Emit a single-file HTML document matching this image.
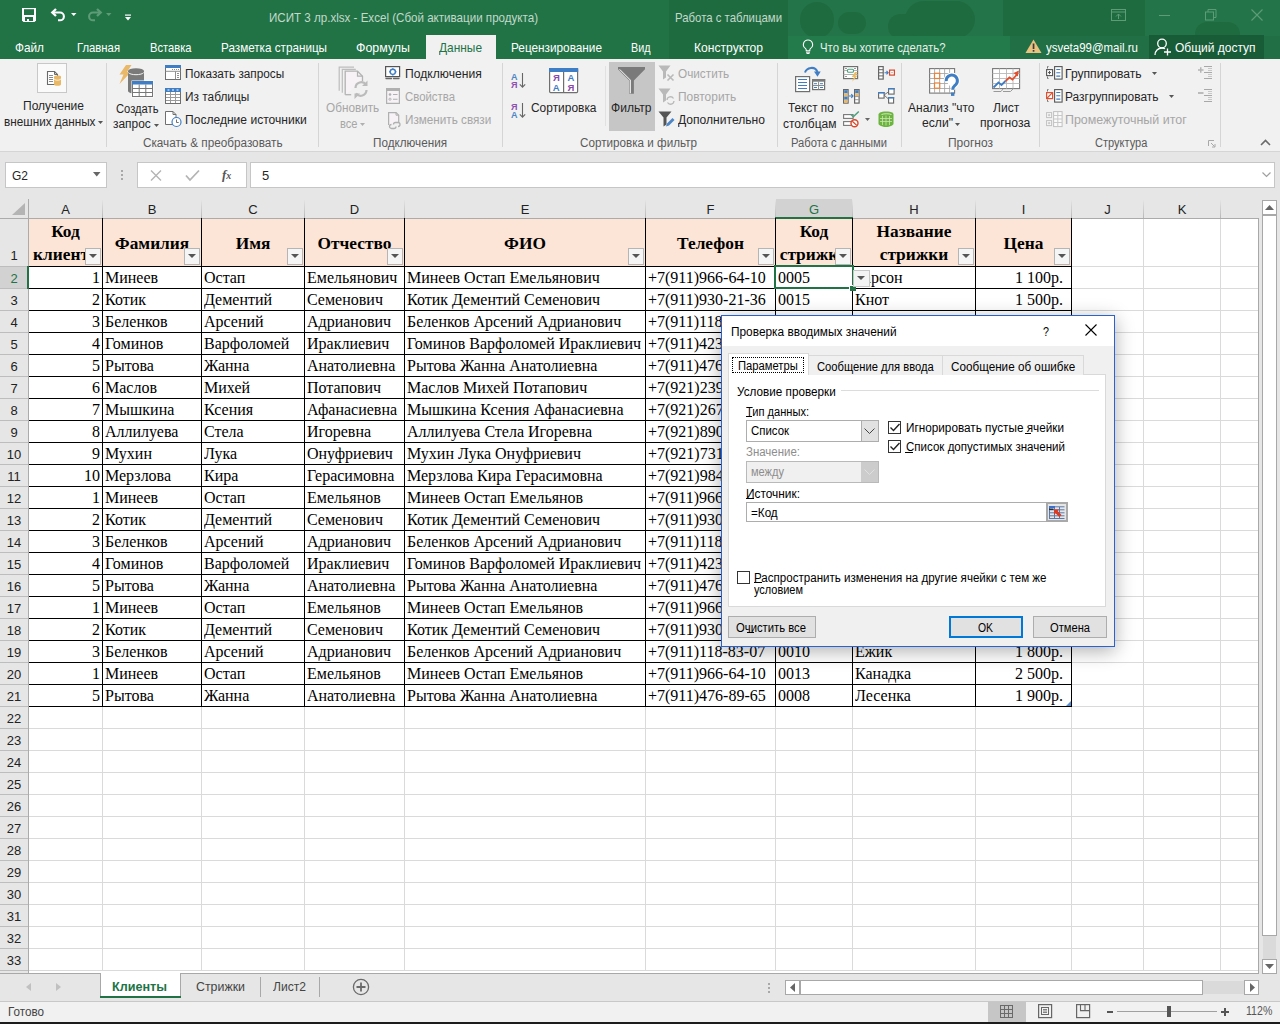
<!DOCTYPE html>
<html><head><meta charset="utf-8"><title>Excel</title>
<style>
*{box-sizing:border-box;margin:0;padding:0}
html,body{width:1280px;height:1024px;overflow:hidden;background:#fff;font-family:"Liberation Sans",sans-serif;font-size:12px;color:#262626;position:relative}
.a{position:absolute;white-space:nowrap}
svg.a{overflow:visible}
</style></head><body>
<div class="a" style="left:0px;top:199px;width:1280px;height:772px;background:#fff"></div>
<div class="a" style="left:0px;top:199px;width:1258px;height:19px;background:#e6e6e6"></div>
<div class="a" style="left:0px;top:218px;width:1258px;height:1px;background:#ababab"></div>
<div class="a" style="left:0px;top:219px;width:28px;height:752px;background:#e6e6e6"></div>
<div class="a" style="left:28px;top:199px;width:1px;height:772px;background:#ababab"></div>
<svg class="a" style="left:10px;top:202px" width="16" height="14"><polygon points="15,1 15,13 2,13" fill="#b4b4b4"/></svg>
<div class="a" style="left:102px;top:199px;width:1px;height:19px;background:linear-gradient(#e6e6e6,#b8b8b8)"></div>
<div class="a" style="left:201px;top:199px;width:1px;height:19px;background:linear-gradient(#e6e6e6,#b8b8b8)"></div>
<div class="a" style="left:304px;top:199px;width:1px;height:19px;background:linear-gradient(#e6e6e6,#b8b8b8)"></div>
<div class="a" style="left:404px;top:199px;width:1px;height:19px;background:linear-gradient(#e6e6e6,#b8b8b8)"></div>
<div class="a" style="left:645px;top:199px;width:1px;height:19px;background:linear-gradient(#e6e6e6,#b8b8b8)"></div>
<div class="a" style="left:775px;top:199px;width:1px;height:19px;background:linear-gradient(#e6e6e6,#b8b8b8)"></div>
<div class="a" style="left:852px;top:199px;width:1px;height:19px;background:linear-gradient(#e6e6e6,#b8b8b8)"></div>
<div class="a" style="left:975px;top:199px;width:1px;height:19px;background:linear-gradient(#e6e6e6,#b8b8b8)"></div>
<div class="a" style="left:1071px;top:199px;width:1px;height:19px;background:linear-gradient(#e6e6e6,#b8b8b8)"></div>
<div class="a" style="left:1143px;top:199px;width:1px;height:19px;background:linear-gradient(#e6e6e6,#b8b8b8)"></div>
<div class="a" style="left:1220px;top:199px;width:1px;height:19px;background:linear-gradient(#e6e6e6,#b8b8b8)"></div>
<div class="a" style="left:776px;top:199px;width:76px;height:19px;background:#d2d2d2"></div>
<div class="a" style="left:775px;top:217px;width:78px;height:2px;background:#217346"></div>
<div class="a" style="left:-434.5px;width:1000px;text-align:center;top:203.00px;font-size:13px;line-height:13px;color:#222;font-family:'Liberation Sans',sans-serif;">A</div>
<div class="a" style="left:-348.0px;width:1000px;text-align:center;top:203.00px;font-size:13px;line-height:13px;color:#222;font-family:'Liberation Sans',sans-serif;">B</div>
<div class="a" style="left:-247.0px;width:1000px;text-align:center;top:203.00px;font-size:13px;line-height:13px;color:#222;font-family:'Liberation Sans',sans-serif;">C</div>
<div class="a" style="left:-145.5px;width:1000px;text-align:center;top:203.00px;font-size:13px;line-height:13px;color:#222;font-family:'Liberation Sans',sans-serif;">D</div>
<div class="a" style="left:25.0px;width:1000px;text-align:center;top:203.00px;font-size:13px;line-height:13px;color:#222;font-family:'Liberation Sans',sans-serif;">E</div>
<div class="a" style="left:210.5px;width:1000px;text-align:center;top:203.00px;font-size:13px;line-height:13px;color:#222;font-family:'Liberation Sans',sans-serif;">F</div>
<div class="a" style="left:314.0px;width:1000px;text-align:center;top:203.00px;font-size:13px;line-height:13px;color:#217346;font-family:'Liberation Sans',sans-serif;">G</div>
<div class="a" style="left:414.0px;width:1000px;text-align:center;top:203.00px;font-size:13px;line-height:13px;color:#222;font-family:'Liberation Sans',sans-serif;">H</div>
<div class="a" style="left:523.5px;width:1000px;text-align:center;top:203.00px;font-size:13px;line-height:13px;color:#222;font-family:'Liberation Sans',sans-serif;">I</div>
<div class="a" style="left:607.5px;width:1000px;text-align:center;top:203.00px;font-size:13px;line-height:13px;color:#222;font-family:'Liberation Sans',sans-serif;">J</div>
<div class="a" style="left:682.0px;width:1000px;text-align:center;top:203.00px;font-size:13px;line-height:13px;color:#222;font-family:'Liberation Sans',sans-serif;">K</div>
<div class="a" style="left:29px;top:266px;width:1229px;height:1px;background:#dadada"></div>
<div class="a" style="left:29px;top:288px;width:1229px;height:1px;background:#dadada"></div>
<div class="a" style="left:29px;top:310px;width:1229px;height:1px;background:#dadada"></div>
<div class="a" style="left:29px;top:332px;width:1229px;height:1px;background:#dadada"></div>
<div class="a" style="left:29px;top:354px;width:1229px;height:1px;background:#dadada"></div>
<div class="a" style="left:29px;top:376px;width:1229px;height:1px;background:#dadada"></div>
<div class="a" style="left:29px;top:398px;width:1229px;height:1px;background:#dadada"></div>
<div class="a" style="left:29px;top:420px;width:1229px;height:1px;background:#dadada"></div>
<div class="a" style="left:29px;top:442px;width:1229px;height:1px;background:#dadada"></div>
<div class="a" style="left:29px;top:464px;width:1229px;height:1px;background:#dadada"></div>
<div class="a" style="left:29px;top:486px;width:1229px;height:1px;background:#dadada"></div>
<div class="a" style="left:29px;top:508px;width:1229px;height:1px;background:#dadada"></div>
<div class="a" style="left:29px;top:530px;width:1229px;height:1px;background:#dadada"></div>
<div class="a" style="left:29px;top:552px;width:1229px;height:1px;background:#dadada"></div>
<div class="a" style="left:29px;top:574px;width:1229px;height:1px;background:#dadada"></div>
<div class="a" style="left:29px;top:596px;width:1229px;height:1px;background:#dadada"></div>
<div class="a" style="left:29px;top:618px;width:1229px;height:1px;background:#dadada"></div>
<div class="a" style="left:29px;top:640px;width:1229px;height:1px;background:#dadada"></div>
<div class="a" style="left:29px;top:662px;width:1229px;height:1px;background:#dadada"></div>
<div class="a" style="left:29px;top:684px;width:1229px;height:1px;background:#dadada"></div>
<div class="a" style="left:29px;top:706px;width:1229px;height:1px;background:#dadada"></div>
<div class="a" style="left:29px;top:728px;width:1229px;height:1px;background:#dadada"></div>
<div class="a" style="left:29px;top:750px;width:1229px;height:1px;background:#dadada"></div>
<div class="a" style="left:29px;top:772px;width:1229px;height:1px;background:#dadada"></div>
<div class="a" style="left:29px;top:794px;width:1229px;height:1px;background:#dadada"></div>
<div class="a" style="left:29px;top:816px;width:1229px;height:1px;background:#dadada"></div>
<div class="a" style="left:29px;top:838px;width:1229px;height:1px;background:#dadada"></div>
<div class="a" style="left:29px;top:860px;width:1229px;height:1px;background:#dadada"></div>
<div class="a" style="left:29px;top:882px;width:1229px;height:1px;background:#dadada"></div>
<div class="a" style="left:29px;top:904px;width:1229px;height:1px;background:#dadada"></div>
<div class="a" style="left:29px;top:926px;width:1229px;height:1px;background:#dadada"></div>
<div class="a" style="left:29px;top:948px;width:1229px;height:1px;background:#dadada"></div>
<div class="a" style="left:29px;top:970px;width:1229px;height:1px;background:#dadada"></div>
<div class="a" style="left:102px;top:219px;width:1px;height:752px;background:#dadada"></div>
<div class="a" style="left:201px;top:219px;width:1px;height:752px;background:#dadada"></div>
<div class="a" style="left:304px;top:219px;width:1px;height:752px;background:#dadada"></div>
<div class="a" style="left:404px;top:219px;width:1px;height:752px;background:#dadada"></div>
<div class="a" style="left:645px;top:219px;width:1px;height:752px;background:#dadada"></div>
<div class="a" style="left:775px;top:219px;width:1px;height:752px;background:#dadada"></div>
<div class="a" style="left:852px;top:219px;width:1px;height:752px;background:#dadada"></div>
<div class="a" style="left:975px;top:219px;width:1px;height:752px;background:#dadada"></div>
<div class="a" style="left:1071px;top:219px;width:1px;height:752px;background:#dadada"></div>
<div class="a" style="left:1143px;top:219px;width:1px;height:752px;background:#dadada"></div>
<div class="a" style="left:1220px;top:219px;width:1px;height:752px;background:#dadada"></div>
<div class="a" style="left:0px;top:266px;width:28px;height:1px;background:#bdbdbd"></div>
<div class="a" style="left:-486px;width:1000px;text-align:center;top:249.00px;font-size:13px;line-height:13px;color:#222;font-family:'Liberation Sans',sans-serif;">1</div>
<div class="a" style="left:0px;top:288px;width:28px;height:1px;background:#bdbdbd"></div>
<div class="a" style="left:0px;top:267px;width:27px;height:21px;background:#d2d2d2"></div>
<div class="a" style="left:27px;top:266px;width:2px;height:23px;background:#217346"></div>
<div class="a" style="left:-486px;width:1000px;text-align:center;top:272.00px;font-size:13px;line-height:13px;color:#217346;font-family:'Liberation Sans',sans-serif;">2</div>
<div class="a" style="left:0px;top:310px;width:28px;height:1px;background:#bdbdbd"></div>
<div class="a" style="left:-486px;width:1000px;text-align:center;top:294.00px;font-size:13px;line-height:13px;color:#222;font-family:'Liberation Sans',sans-serif;">3</div>
<div class="a" style="left:0px;top:332px;width:28px;height:1px;background:#bdbdbd"></div>
<div class="a" style="left:-486px;width:1000px;text-align:center;top:316.00px;font-size:13px;line-height:13px;color:#222;font-family:'Liberation Sans',sans-serif;">4</div>
<div class="a" style="left:0px;top:354px;width:28px;height:1px;background:#bdbdbd"></div>
<div class="a" style="left:-486px;width:1000px;text-align:center;top:338.00px;font-size:13px;line-height:13px;color:#222;font-family:'Liberation Sans',sans-serif;">5</div>
<div class="a" style="left:0px;top:376px;width:28px;height:1px;background:#bdbdbd"></div>
<div class="a" style="left:-486px;width:1000px;text-align:center;top:360.00px;font-size:13px;line-height:13px;color:#222;font-family:'Liberation Sans',sans-serif;">6</div>
<div class="a" style="left:0px;top:398px;width:28px;height:1px;background:#bdbdbd"></div>
<div class="a" style="left:-486px;width:1000px;text-align:center;top:382.00px;font-size:13px;line-height:13px;color:#222;font-family:'Liberation Sans',sans-serif;">7</div>
<div class="a" style="left:0px;top:420px;width:28px;height:1px;background:#bdbdbd"></div>
<div class="a" style="left:-486px;width:1000px;text-align:center;top:404.00px;font-size:13px;line-height:13px;color:#222;font-family:'Liberation Sans',sans-serif;">8</div>
<div class="a" style="left:0px;top:442px;width:28px;height:1px;background:#bdbdbd"></div>
<div class="a" style="left:-486px;width:1000px;text-align:center;top:426.00px;font-size:13px;line-height:13px;color:#222;font-family:'Liberation Sans',sans-serif;">9</div>
<div class="a" style="left:0px;top:464px;width:28px;height:1px;background:#bdbdbd"></div>
<div class="a" style="left:-486px;width:1000px;text-align:center;top:448.00px;font-size:13px;line-height:13px;color:#222;font-family:'Liberation Sans',sans-serif;">10</div>
<div class="a" style="left:0px;top:486px;width:28px;height:1px;background:#bdbdbd"></div>
<div class="a" style="left:-486px;width:1000px;text-align:center;top:470.00px;font-size:13px;line-height:13px;color:#222;font-family:'Liberation Sans',sans-serif;">11</div>
<div class="a" style="left:0px;top:508px;width:28px;height:1px;background:#bdbdbd"></div>
<div class="a" style="left:-486px;width:1000px;text-align:center;top:492.00px;font-size:13px;line-height:13px;color:#222;font-family:'Liberation Sans',sans-serif;">12</div>
<div class="a" style="left:0px;top:530px;width:28px;height:1px;background:#bdbdbd"></div>
<div class="a" style="left:-486px;width:1000px;text-align:center;top:514.00px;font-size:13px;line-height:13px;color:#222;font-family:'Liberation Sans',sans-serif;">13</div>
<div class="a" style="left:0px;top:552px;width:28px;height:1px;background:#bdbdbd"></div>
<div class="a" style="left:-486px;width:1000px;text-align:center;top:536.00px;font-size:13px;line-height:13px;color:#222;font-family:'Liberation Sans',sans-serif;">14</div>
<div class="a" style="left:0px;top:574px;width:28px;height:1px;background:#bdbdbd"></div>
<div class="a" style="left:-486px;width:1000px;text-align:center;top:558.00px;font-size:13px;line-height:13px;color:#222;font-family:'Liberation Sans',sans-serif;">15</div>
<div class="a" style="left:0px;top:596px;width:28px;height:1px;background:#bdbdbd"></div>
<div class="a" style="left:-486px;width:1000px;text-align:center;top:580.00px;font-size:13px;line-height:13px;color:#222;font-family:'Liberation Sans',sans-serif;">16</div>
<div class="a" style="left:0px;top:618px;width:28px;height:1px;background:#bdbdbd"></div>
<div class="a" style="left:-486px;width:1000px;text-align:center;top:602.00px;font-size:13px;line-height:13px;color:#222;font-family:'Liberation Sans',sans-serif;">17</div>
<div class="a" style="left:0px;top:640px;width:28px;height:1px;background:#bdbdbd"></div>
<div class="a" style="left:-486px;width:1000px;text-align:center;top:624.00px;font-size:13px;line-height:13px;color:#222;font-family:'Liberation Sans',sans-serif;">18</div>
<div class="a" style="left:0px;top:662px;width:28px;height:1px;background:#bdbdbd"></div>
<div class="a" style="left:-486px;width:1000px;text-align:center;top:646.00px;font-size:13px;line-height:13px;color:#222;font-family:'Liberation Sans',sans-serif;">19</div>
<div class="a" style="left:0px;top:684px;width:28px;height:1px;background:#bdbdbd"></div>
<div class="a" style="left:-486px;width:1000px;text-align:center;top:668.00px;font-size:13px;line-height:13px;color:#222;font-family:'Liberation Sans',sans-serif;">20</div>
<div class="a" style="left:0px;top:706px;width:28px;height:1px;background:#bdbdbd"></div>
<div class="a" style="left:-486px;width:1000px;text-align:center;top:690.00px;font-size:13px;line-height:13px;color:#222;font-family:'Liberation Sans',sans-serif;">21</div>
<div class="a" style="left:0px;top:728px;width:28px;height:1px;background:#bdbdbd"></div>
<div class="a" style="left:-486px;width:1000px;text-align:center;top:712.00px;font-size:13px;line-height:13px;color:#222;font-family:'Liberation Sans',sans-serif;">22</div>
<div class="a" style="left:0px;top:750px;width:28px;height:1px;background:#bdbdbd"></div>
<div class="a" style="left:-486px;width:1000px;text-align:center;top:734.00px;font-size:13px;line-height:13px;color:#222;font-family:'Liberation Sans',sans-serif;">23</div>
<div class="a" style="left:0px;top:772px;width:28px;height:1px;background:#bdbdbd"></div>
<div class="a" style="left:-486px;width:1000px;text-align:center;top:756.00px;font-size:13px;line-height:13px;color:#222;font-family:'Liberation Sans',sans-serif;">24</div>
<div class="a" style="left:0px;top:794px;width:28px;height:1px;background:#bdbdbd"></div>
<div class="a" style="left:-486px;width:1000px;text-align:center;top:778.00px;font-size:13px;line-height:13px;color:#222;font-family:'Liberation Sans',sans-serif;">25</div>
<div class="a" style="left:0px;top:816px;width:28px;height:1px;background:#bdbdbd"></div>
<div class="a" style="left:-486px;width:1000px;text-align:center;top:800.00px;font-size:13px;line-height:13px;color:#222;font-family:'Liberation Sans',sans-serif;">26</div>
<div class="a" style="left:0px;top:838px;width:28px;height:1px;background:#bdbdbd"></div>
<div class="a" style="left:-486px;width:1000px;text-align:center;top:822.00px;font-size:13px;line-height:13px;color:#222;font-family:'Liberation Sans',sans-serif;">27</div>
<div class="a" style="left:0px;top:860px;width:28px;height:1px;background:#bdbdbd"></div>
<div class="a" style="left:-486px;width:1000px;text-align:center;top:844.00px;font-size:13px;line-height:13px;color:#222;font-family:'Liberation Sans',sans-serif;">28</div>
<div class="a" style="left:0px;top:882px;width:28px;height:1px;background:#bdbdbd"></div>
<div class="a" style="left:-486px;width:1000px;text-align:center;top:866.00px;font-size:13px;line-height:13px;color:#222;font-family:'Liberation Sans',sans-serif;">29</div>
<div class="a" style="left:0px;top:904px;width:28px;height:1px;background:#bdbdbd"></div>
<div class="a" style="left:-486px;width:1000px;text-align:center;top:888.00px;font-size:13px;line-height:13px;color:#222;font-family:'Liberation Sans',sans-serif;">30</div>
<div class="a" style="left:0px;top:926px;width:28px;height:1px;background:#bdbdbd"></div>
<div class="a" style="left:-486px;width:1000px;text-align:center;top:910.00px;font-size:13px;line-height:13px;color:#222;font-family:'Liberation Sans',sans-serif;">31</div>
<div class="a" style="left:0px;top:948px;width:28px;height:1px;background:#bdbdbd"></div>
<div class="a" style="left:-486px;width:1000px;text-align:center;top:932.00px;font-size:13px;line-height:13px;color:#222;font-family:'Liberation Sans',sans-serif;">32</div>
<div class="a" style="left:0px;top:970px;width:28px;height:1px;background:#bdbdbd"></div>
<div class="a" style="left:-486px;width:1000px;text-align:center;top:954.00px;font-size:13px;line-height:13px;color:#222;font-family:'Liberation Sans',sans-serif;">33</div>
<div class="a" style="left:29px;top:219px;width:1042px;height:47px;background:#fce4d6"></div>
<div class="a" style="left:102px;top:218px;width:1px;height:489px;background:#000"></div>
<div class="a" style="left:201px;top:218px;width:1px;height:489px;background:#000"></div>
<div class="a" style="left:304px;top:218px;width:1px;height:489px;background:#000"></div>
<div class="a" style="left:404px;top:218px;width:1px;height:489px;background:#000"></div>
<div class="a" style="left:645px;top:218px;width:1px;height:489px;background:#000"></div>
<div class="a" style="left:775px;top:218px;width:1px;height:489px;background:#000"></div>
<div class="a" style="left:852px;top:218px;width:1px;height:489px;background:#000"></div>
<div class="a" style="left:975px;top:218px;width:1px;height:489px;background:#000"></div>
<div class="a" style="left:1071px;top:218px;width:1px;height:489px;background:#000"></div>
<div class="a" style="left:29px;top:266px;width:1042px;height:1px;background:#000"></div>
<div class="a" style="left:29px;top:288px;width:1042px;height:1px;background:#000"></div>
<div class="a" style="left:29px;top:310px;width:1042px;height:1px;background:#000"></div>
<div class="a" style="left:29px;top:332px;width:1042px;height:1px;background:#000"></div>
<div class="a" style="left:29px;top:354px;width:1042px;height:1px;background:#000"></div>
<div class="a" style="left:29px;top:376px;width:1042px;height:1px;background:#000"></div>
<div class="a" style="left:29px;top:398px;width:1042px;height:1px;background:#000"></div>
<div class="a" style="left:29px;top:420px;width:1042px;height:1px;background:#000"></div>
<div class="a" style="left:29px;top:442px;width:1042px;height:1px;background:#000"></div>
<div class="a" style="left:29px;top:464px;width:1042px;height:1px;background:#000"></div>
<div class="a" style="left:29px;top:486px;width:1042px;height:1px;background:#000"></div>
<div class="a" style="left:29px;top:508px;width:1042px;height:1px;background:#000"></div>
<div class="a" style="left:29px;top:530px;width:1042px;height:1px;background:#000"></div>
<div class="a" style="left:29px;top:552px;width:1042px;height:1px;background:#000"></div>
<div class="a" style="left:29px;top:574px;width:1042px;height:1px;background:#000"></div>
<div class="a" style="left:29px;top:596px;width:1042px;height:1px;background:#000"></div>
<div class="a" style="left:29px;top:618px;width:1042px;height:1px;background:#000"></div>
<div class="a" style="left:29px;top:640px;width:1042px;height:1px;background:#000"></div>
<div class="a" style="left:29px;top:662px;width:1042px;height:1px;background:#000"></div>
<div class="a" style="left:29px;top:684px;width:1042px;height:1px;background:#000"></div>
<div class="a" style="left:29px;top:706px;width:1042px;height:1px;background:#000"></div>
<div class="a" style="left:-434.5px;width:1000px;text-align:center;top:222.99px;font-size:17.33px;line-height:17.33px;color:#000;font-family:'Liberation Serif',serif;font-weight:bold;">Код</div>
<div class="a" style="left:-434.5px;width:1000px;text-align:center;top:246.49px;font-size:17.33px;line-height:17.33px;color:#000;font-family:'Liberation Serif',serif;font-weight:bold;">клиента</div>
<div class="a" style="left:-348.0px;width:1000px;text-align:center;top:234.99px;font-size:17.33px;line-height:17.33px;color:#000;font-family:'Liberation Serif',serif;font-weight:bold;">Фамилия</div>
<div class="a" style="left:-247.0px;width:1000px;text-align:center;top:234.99px;font-size:17.33px;line-height:17.33px;color:#000;font-family:'Liberation Serif',serif;font-weight:bold;">Имя</div>
<div class="a" style="left:-145.5px;width:1000px;text-align:center;top:234.99px;font-size:17.33px;line-height:17.33px;color:#000;font-family:'Liberation Serif',serif;font-weight:bold;">Отчество</div>
<div class="a" style="left:25.0px;width:1000px;text-align:center;top:234.99px;font-size:17.33px;line-height:17.33px;color:#000;font-family:'Liberation Serif',serif;font-weight:bold;">ФИО</div>
<div class="a" style="left:210.5px;width:1000px;text-align:center;top:234.99px;font-size:17.33px;line-height:17.33px;color:#000;font-family:'Liberation Serif',serif;font-weight:bold;">Телефон</div>
<div class="a" style="left:314.0px;width:1000px;text-align:center;top:222.99px;font-size:17.33px;line-height:17.33px;color:#000;font-family:'Liberation Serif',serif;font-weight:bold;">Код</div>
<div class="a" style="left:314.0px;width:1000px;text-align:center;top:246.49px;font-size:17.33px;line-height:17.33px;color:#000;font-family:'Liberation Serif',serif;font-weight:bold;">стрижки</div>
<div class="a" style="left:414.0px;width:1000px;text-align:center;top:222.99px;font-size:17.33px;line-height:17.33px;color:#000;font-family:'Liberation Serif',serif;font-weight:bold;">Название</div>
<div class="a" style="left:414.0px;width:1000px;text-align:center;top:246.49px;font-size:17.33px;line-height:17.33px;color:#000;font-family:'Liberation Serif',serif;font-weight:bold;">стрижки</div>
<div class="a" style="left:523.5px;width:1000px;text-align:center;top:234.99px;font-size:17.33px;line-height:17.33px;color:#000;font-family:'Liberation Serif',serif;font-weight:bold;">Цена</div>
<div class="a" style="left:85px;top:248px;width:16px;height:17px;background:#f5f5f5;border:1px solid #b5b5b5"></div>
<svg class="a" style="left:89px;top:254px" width="9" height="5"><polygon points="0,0 8,0 4,4" fill="#555"/></svg>
<div class="a" style="left:184px;top:248px;width:16px;height:17px;background:#f5f5f5;border:1px solid #b5b5b5"></div>
<svg class="a" style="left:188px;top:254px" width="9" height="5"><polygon points="0,0 8,0 4,4" fill="#555"/></svg>
<div class="a" style="left:287px;top:248px;width:16px;height:17px;background:#f5f5f5;border:1px solid #b5b5b5"></div>
<svg class="a" style="left:291px;top:254px" width="9" height="5"><polygon points="0,0 8,0 4,4" fill="#555"/></svg>
<div class="a" style="left:387px;top:248px;width:16px;height:17px;background:#f5f5f5;border:1px solid #b5b5b5"></div>
<svg class="a" style="left:391px;top:254px" width="9" height="5"><polygon points="0,0 8,0 4,4" fill="#555"/></svg>
<div class="a" style="left:628px;top:248px;width:16px;height:17px;background:#f5f5f5;border:1px solid #b5b5b5"></div>
<svg class="a" style="left:632px;top:254px" width="9" height="5"><polygon points="0,0 8,0 4,4" fill="#555"/></svg>
<div class="a" style="left:758px;top:248px;width:16px;height:17px;background:#f5f5f5;border:1px solid #b5b5b5"></div>
<svg class="a" style="left:762px;top:254px" width="9" height="5"><polygon points="0,0 8,0 4,4" fill="#555"/></svg>
<div class="a" style="left:835px;top:248px;width:16px;height:17px;background:#f5f5f5;border:1px solid #b5b5b5"></div>
<svg class="a" style="left:839px;top:254px" width="9" height="5"><polygon points="0,0 8,0 4,4" fill="#555"/></svg>
<div class="a" style="left:958px;top:248px;width:16px;height:17px;background:#f5f5f5;border:1px solid #b5b5b5"></div>
<svg class="a" style="left:962px;top:254px" width="9" height="5"><polygon points="0,0 8,0 4,4" fill="#555"/></svg>
<div class="a" style="left:1054px;top:248px;width:16px;height:17px;background:#f5f5f5;border:1px solid #b5b5b5"></div>
<svg class="a" style="left:1058px;top:254px" width="9" height="5"><polygon points="0,0 8,0 4,4" fill="#555"/></svg>
<div class="a" style="right:1180px;top:269.90px;font-size:16px;line-height:16px;color:#000;font-family:'Liberation Serif',serif;">1</div>
<div class="a" style="left:105px;top:269.90px;width:97px;overflow:hidden;font-family:'Liberation Serif',serif;font-size:16px;line-height:16px;color:#000;padding-bottom:5px">Минеев</div>
<div class="a" style="left:204px;top:269.90px;width:101px;overflow:hidden;font-family:'Liberation Serif',serif;font-size:16px;line-height:16px;color:#000;padding-bottom:5px">Остап</div>
<div class="a" style="left:307px;top:269.90px;width:98px;overflow:hidden;font-family:'Liberation Serif',serif;font-size:16px;line-height:16px;color:#000;padding-bottom:5px">Емельянович</div>
<div class="a" style="left:407px;top:269.90px;width:239px;overflow:hidden;font-family:'Liberation Serif',serif;font-size:16px;line-height:16px;color:#000;padding-bottom:5px">Минеев Остап Емельянович</div>
<div class="a" style="left:648px;top:269.90px;width:128px;overflow:hidden;font-family:'Liberation Serif',serif;font-size:16px;line-height:16px;color:#000;padding-bottom:5px">+7(911)966-64-10</div>
<div class="a" style="left:778px;top:269.90px;width:75px;overflow:hidden;font-family:'Liberation Serif',serif;font-size:16px;line-height:16px;color:#000;padding-bottom:5px">0005</div>
<div class="a" style="left:855px;top:269.90px;width:121px;overflow:hidden;font-family:'Liberation Serif',serif;font-size:16px;line-height:16px;color:#000;padding-bottom:5px">Гарсон</div>
<div class="a" style="right:217px;top:269.90px;font-size:16px;line-height:16px;color:#000;font-family:'Liberation Serif',serif;">1 100р.</div>
<div class="a" style="right:1180px;top:291.90px;font-size:16px;line-height:16px;color:#000;font-family:'Liberation Serif',serif;">2</div>
<div class="a" style="left:105px;top:291.90px;width:97px;overflow:hidden;font-family:'Liberation Serif',serif;font-size:16px;line-height:16px;color:#000;padding-bottom:5px">Котик</div>
<div class="a" style="left:204px;top:291.90px;width:101px;overflow:hidden;font-family:'Liberation Serif',serif;font-size:16px;line-height:16px;color:#000;padding-bottom:5px">Дементий</div>
<div class="a" style="left:307px;top:291.90px;width:98px;overflow:hidden;font-family:'Liberation Serif',serif;font-size:16px;line-height:16px;color:#000;padding-bottom:5px">Семенович</div>
<div class="a" style="left:407px;top:291.90px;width:239px;overflow:hidden;font-family:'Liberation Serif',serif;font-size:16px;line-height:16px;color:#000;padding-bottom:5px">Котик Дементий Семенович</div>
<div class="a" style="left:648px;top:291.90px;width:128px;overflow:hidden;font-family:'Liberation Serif',serif;font-size:16px;line-height:16px;color:#000;padding-bottom:5px">+7(911)930-21-36</div>
<div class="a" style="left:778px;top:291.90px;width:75px;overflow:hidden;font-family:'Liberation Serif',serif;font-size:16px;line-height:16px;color:#000;padding-bottom:5px">0015</div>
<div class="a" style="left:855px;top:291.90px;width:121px;overflow:hidden;font-family:'Liberation Serif',serif;font-size:16px;line-height:16px;color:#000;padding-bottom:5px">Кнот</div>
<div class="a" style="right:217px;top:291.90px;font-size:16px;line-height:16px;color:#000;font-family:'Liberation Serif',serif;">1 500р.</div>
<div class="a" style="right:1180px;top:313.90px;font-size:16px;line-height:16px;color:#000;font-family:'Liberation Serif',serif;">3</div>
<div class="a" style="left:105px;top:313.90px;width:97px;overflow:hidden;font-family:'Liberation Serif',serif;font-size:16px;line-height:16px;color:#000;padding-bottom:5px">Беленков</div>
<div class="a" style="left:204px;top:313.90px;width:101px;overflow:hidden;font-family:'Liberation Serif',serif;font-size:16px;line-height:16px;color:#000;padding-bottom:5px">Арсений</div>
<div class="a" style="left:307px;top:313.90px;width:98px;overflow:hidden;font-family:'Liberation Serif',serif;font-size:16px;line-height:16px;color:#000;padding-bottom:5px">Адрианович</div>
<div class="a" style="left:407px;top:313.90px;width:239px;overflow:hidden;font-family:'Liberation Serif',serif;font-size:16px;line-height:16px;color:#000;padding-bottom:5px">Беленков Арсений Адрианович</div>
<div class="a" style="left:648px;top:313.90px;width:128px;overflow:hidden;font-family:'Liberation Serif',serif;font-size:16px;line-height:16px;color:#000;padding-bottom:5px">+7(911)118-83-07</div>
<div class="a" style="left:778px;top:313.90px;width:75px;overflow:hidden;font-family:'Liberation Serif',serif;font-size:16px;line-height:16px;color:#000;padding-bottom:5px">0010</div>
<div class="a" style="left:855px;top:313.90px;width:121px;overflow:hidden;font-family:'Liberation Serif',serif;font-size:16px;line-height:16px;color:#000;padding-bottom:5px">Ежик</div>
<div class="a" style="right:217px;top:313.90px;font-size:16px;line-height:16px;color:#000;font-family:'Liberation Serif',serif;">1 800р.</div>
<div class="a" style="right:1180px;top:335.90px;font-size:16px;line-height:16px;color:#000;font-family:'Liberation Serif',serif;">4</div>
<div class="a" style="left:105px;top:335.90px;width:97px;overflow:hidden;font-family:'Liberation Serif',serif;font-size:16px;line-height:16px;color:#000;padding-bottom:5px">Гоминов</div>
<div class="a" style="left:204px;top:335.90px;width:101px;overflow:hidden;font-family:'Liberation Serif',serif;font-size:16px;line-height:16px;color:#000;padding-bottom:5px">Варфоломей</div>
<div class="a" style="left:307px;top:335.90px;width:98px;overflow:hidden;font-family:'Liberation Serif',serif;font-size:16px;line-height:16px;color:#000;padding-bottom:5px">Ираклиевич</div>
<div class="a" style="left:407px;top:335.90px;width:239px;overflow:hidden;font-family:'Liberation Serif',serif;font-size:16px;line-height:16px;color:#000;padding-bottom:5px">Гоминов Варфоломей Ираклиевич</div>
<div class="a" style="left:648px;top:335.90px;width:128px;overflow:hidden;font-family:'Liberation Serif',serif;font-size:16px;line-height:16px;color:#000;padding-bottom:5px">+7(911)423-11-22</div>
<div class="a" style="left:778px;top:335.90px;width:75px;overflow:hidden;font-family:'Liberation Serif',serif;font-size:16px;line-height:16px;color:#000;padding-bottom:5px">0011</div>
<div class="a" style="left:855px;top:335.90px;width:121px;overflow:hidden;font-family:'Liberation Serif',serif;font-size:16px;line-height:16px;color:#000;padding-bottom:5px">Каре</div>
<div class="a" style="right:217px;top:335.90px;font-size:16px;line-height:16px;color:#000;font-family:'Liberation Serif',serif;">1 200р.</div>
<div class="a" style="right:1180px;top:357.90px;font-size:16px;line-height:16px;color:#000;font-family:'Liberation Serif',serif;">5</div>
<div class="a" style="left:105px;top:357.90px;width:97px;overflow:hidden;font-family:'Liberation Serif',serif;font-size:16px;line-height:16px;color:#000;padding-bottom:5px">Рытова</div>
<div class="a" style="left:204px;top:357.90px;width:101px;overflow:hidden;font-family:'Liberation Serif',serif;font-size:16px;line-height:16px;color:#000;padding-bottom:5px">Жанна</div>
<div class="a" style="left:307px;top:357.90px;width:98px;overflow:hidden;font-family:'Liberation Serif',serif;font-size:16px;line-height:16px;color:#000;padding-bottom:5px">Анатолиевна</div>
<div class="a" style="left:407px;top:357.90px;width:239px;overflow:hidden;font-family:'Liberation Serif',serif;font-size:16px;line-height:16px;color:#000;padding-bottom:5px">Рытова Жанна Анатолиевна</div>
<div class="a" style="left:648px;top:357.90px;width:128px;overflow:hidden;font-family:'Liberation Serif',serif;font-size:16px;line-height:16px;color:#000;padding-bottom:5px">+7(911)476-89-65</div>
<div class="a" style="left:778px;top:357.90px;width:75px;overflow:hidden;font-family:'Liberation Serif',serif;font-size:16px;line-height:16px;color:#000;padding-bottom:5px">0008</div>
<div class="a" style="left:855px;top:357.90px;width:121px;overflow:hidden;font-family:'Liberation Serif',serif;font-size:16px;line-height:16px;color:#000;padding-bottom:5px">Лесенка</div>
<div class="a" style="right:217px;top:357.90px;font-size:16px;line-height:16px;color:#000;font-family:'Liberation Serif',serif;">1 900р.</div>
<div class="a" style="right:1180px;top:379.90px;font-size:16px;line-height:16px;color:#000;font-family:'Liberation Serif',serif;">6</div>
<div class="a" style="left:105px;top:379.90px;width:97px;overflow:hidden;font-family:'Liberation Serif',serif;font-size:16px;line-height:16px;color:#000;padding-bottom:5px">Маслов</div>
<div class="a" style="left:204px;top:379.90px;width:101px;overflow:hidden;font-family:'Liberation Serif',serif;font-size:16px;line-height:16px;color:#000;padding-bottom:5px">Михей</div>
<div class="a" style="left:307px;top:379.90px;width:98px;overflow:hidden;font-family:'Liberation Serif',serif;font-size:16px;line-height:16px;color:#000;padding-bottom:5px">Потапович</div>
<div class="a" style="left:407px;top:379.90px;width:239px;overflow:hidden;font-family:'Liberation Serif',serif;font-size:16px;line-height:16px;color:#000;padding-bottom:5px">Маслов Михей Потапович</div>
<div class="a" style="left:648px;top:379.90px;width:128px;overflow:hidden;font-family:'Liberation Serif',serif;font-size:16px;line-height:16px;color:#000;padding-bottom:5px">+7(921)239-45-12</div>
<div class="a" style="left:778px;top:379.90px;width:75px;overflow:hidden;font-family:'Liberation Serif',serif;font-size:16px;line-height:16px;color:#000;padding-bottom:5px">0001</div>
<div class="a" style="left:855px;top:379.90px;width:121px;overflow:hidden;font-family:'Liberation Serif',serif;font-size:16px;line-height:16px;color:#000;padding-bottom:5px">Бокс</div>
<div class="a" style="right:217px;top:379.90px;font-size:16px;line-height:16px;color:#000;font-family:'Liberation Serif',serif;">1 000р.</div>
<div class="a" style="right:1180px;top:401.90px;font-size:16px;line-height:16px;color:#000;font-family:'Liberation Serif',serif;">7</div>
<div class="a" style="left:105px;top:401.90px;width:97px;overflow:hidden;font-family:'Liberation Serif',serif;font-size:16px;line-height:16px;color:#000;padding-bottom:5px">Мышкина</div>
<div class="a" style="left:204px;top:401.90px;width:101px;overflow:hidden;font-family:'Liberation Serif',serif;font-size:16px;line-height:16px;color:#000;padding-bottom:5px">Ксения</div>
<div class="a" style="left:307px;top:401.90px;width:98px;overflow:hidden;font-family:'Liberation Serif',serif;font-size:16px;line-height:16px;color:#000;padding-bottom:5px">Афанасиевна</div>
<div class="a" style="left:407px;top:401.90px;width:239px;overflow:hidden;font-family:'Liberation Serif',serif;font-size:16px;line-height:16px;color:#000;padding-bottom:5px">Мышкина Ксения Афанасиевна</div>
<div class="a" style="left:648px;top:401.90px;width:128px;overflow:hidden;font-family:'Liberation Serif',serif;font-size:16px;line-height:16px;color:#000;padding-bottom:5px">+7(921)267-33-90</div>
<div class="a" style="left:778px;top:401.90px;width:75px;overflow:hidden;font-family:'Liberation Serif',serif;font-size:16px;line-height:16px;color:#000;padding-bottom:5px">0002</div>
<div class="a" style="left:855px;top:401.90px;width:121px;overflow:hidden;font-family:'Liberation Serif',serif;font-size:16px;line-height:16px;color:#000;padding-bottom:5px">Боб</div>
<div class="a" style="right:217px;top:401.90px;font-size:16px;line-height:16px;color:#000;font-family:'Liberation Serif',serif;">1 600р.</div>
<div class="a" style="right:1180px;top:423.90px;font-size:16px;line-height:16px;color:#000;font-family:'Liberation Serif',serif;">8</div>
<div class="a" style="left:105px;top:423.90px;width:97px;overflow:hidden;font-family:'Liberation Serif',serif;font-size:16px;line-height:16px;color:#000;padding-bottom:5px">Аллилуева</div>
<div class="a" style="left:204px;top:423.90px;width:101px;overflow:hidden;font-family:'Liberation Serif',serif;font-size:16px;line-height:16px;color:#000;padding-bottom:5px">Стела</div>
<div class="a" style="left:307px;top:423.90px;width:98px;overflow:hidden;font-family:'Liberation Serif',serif;font-size:16px;line-height:16px;color:#000;padding-bottom:5px">Игоревна</div>
<div class="a" style="left:407px;top:423.90px;width:239px;overflow:hidden;font-family:'Liberation Serif',serif;font-size:16px;line-height:16px;color:#000;padding-bottom:5px">Аллилуева Стела Игоревна</div>
<div class="a" style="left:648px;top:423.90px;width:128px;overflow:hidden;font-family:'Liberation Serif',serif;font-size:16px;line-height:16px;color:#000;padding-bottom:5px">+7(921)890-12-44</div>
<div class="a" style="left:778px;top:423.90px;width:75px;overflow:hidden;font-family:'Liberation Serif',serif;font-size:16px;line-height:16px;color:#000;padding-bottom:5px">0003</div>
<div class="a" style="left:855px;top:423.90px;width:121px;overflow:hidden;font-family:'Liberation Serif',serif;font-size:16px;line-height:16px;color:#000;padding-bottom:5px">Каскад</div>
<div class="a" style="right:217px;top:423.90px;font-size:16px;line-height:16px;color:#000;font-family:'Liberation Serif',serif;">2 100р.</div>
<div class="a" style="right:1180px;top:445.90px;font-size:16px;line-height:16px;color:#000;font-family:'Liberation Serif',serif;">9</div>
<div class="a" style="left:105px;top:445.90px;width:97px;overflow:hidden;font-family:'Liberation Serif',serif;font-size:16px;line-height:16px;color:#000;padding-bottom:5px">Мухин</div>
<div class="a" style="left:204px;top:445.90px;width:101px;overflow:hidden;font-family:'Liberation Serif',serif;font-size:16px;line-height:16px;color:#000;padding-bottom:5px">Лука</div>
<div class="a" style="left:307px;top:445.90px;width:98px;overflow:hidden;font-family:'Liberation Serif',serif;font-size:16px;line-height:16px;color:#000;padding-bottom:5px">Онуфриевич</div>
<div class="a" style="left:407px;top:445.90px;width:239px;overflow:hidden;font-family:'Liberation Serif',serif;font-size:16px;line-height:16px;color:#000;padding-bottom:5px">Мухин Лука Онуфриевич</div>
<div class="a" style="left:648px;top:445.90px;width:128px;overflow:hidden;font-family:'Liberation Serif',serif;font-size:16px;line-height:16px;color:#000;padding-bottom:5px">+7(921)731-56-78</div>
<div class="a" style="left:778px;top:445.90px;width:75px;overflow:hidden;font-family:'Liberation Serif',serif;font-size:16px;line-height:16px;color:#000;padding-bottom:5px">0004</div>
<div class="a" style="left:855px;top:445.90px;width:121px;overflow:hidden;font-family:'Liberation Serif',serif;font-size:16px;line-height:16px;color:#000;padding-bottom:5px">Теннис</div>
<div class="a" style="right:217px;top:445.90px;font-size:16px;line-height:16px;color:#000;font-family:'Liberation Serif',serif;">1 300р.</div>
<div class="a" style="right:1180px;top:467.90px;font-size:16px;line-height:16px;color:#000;font-family:'Liberation Serif',serif;">10</div>
<div class="a" style="left:105px;top:467.90px;width:97px;overflow:hidden;font-family:'Liberation Serif',serif;font-size:16px;line-height:16px;color:#000;padding-bottom:5px">Мерзлова</div>
<div class="a" style="left:204px;top:467.90px;width:101px;overflow:hidden;font-family:'Liberation Serif',serif;font-size:16px;line-height:16px;color:#000;padding-bottom:5px">Кира</div>
<div class="a" style="left:307px;top:467.90px;width:98px;overflow:hidden;font-family:'Liberation Serif',serif;font-size:16px;line-height:16px;color:#000;padding-bottom:5px">Герасимовна</div>
<div class="a" style="left:407px;top:467.90px;width:239px;overflow:hidden;font-family:'Liberation Serif',serif;font-size:16px;line-height:16px;color:#000;padding-bottom:5px">Мерзлова Кира Герасимовна</div>
<div class="a" style="left:648px;top:467.90px;width:128px;overflow:hidden;font-family:'Liberation Serif',serif;font-size:16px;line-height:16px;color:#000;padding-bottom:5px">+7(921)984-21-09</div>
<div class="a" style="left:778px;top:467.90px;width:75px;overflow:hidden;font-family:'Liberation Serif',serif;font-size:16px;line-height:16px;color:#000;padding-bottom:5px">0006</div>
<div class="a" style="left:855px;top:467.90px;width:121px;overflow:hidden;font-family:'Liberation Serif',serif;font-size:16px;line-height:16px;color:#000;padding-bottom:5px">Гарсон</div>
<div class="a" style="right:217px;top:467.90px;font-size:16px;line-height:16px;color:#000;font-family:'Liberation Serif',serif;">1 700р.</div>
<div class="a" style="right:1180px;top:489.90px;font-size:16px;line-height:16px;color:#000;font-family:'Liberation Serif',serif;">1</div>
<div class="a" style="left:105px;top:489.90px;width:97px;overflow:hidden;font-family:'Liberation Serif',serif;font-size:16px;line-height:16px;color:#000;padding-bottom:5px">Минеев</div>
<div class="a" style="left:204px;top:489.90px;width:101px;overflow:hidden;font-family:'Liberation Serif',serif;font-size:16px;line-height:16px;color:#000;padding-bottom:5px">Остап</div>
<div class="a" style="left:307px;top:489.90px;width:98px;overflow:hidden;font-family:'Liberation Serif',serif;font-size:16px;line-height:16px;color:#000;padding-bottom:5px">Емельянов</div>
<div class="a" style="left:407px;top:489.90px;width:239px;overflow:hidden;font-family:'Liberation Serif',serif;font-size:16px;line-height:16px;color:#000;padding-bottom:5px">Минеев Остап Емельянов</div>
<div class="a" style="left:648px;top:489.90px;width:128px;overflow:hidden;font-family:'Liberation Serif',serif;font-size:16px;line-height:16px;color:#000;padding-bottom:5px">+7(911)966-64-10</div>
<div class="a" style="left:778px;top:489.90px;width:75px;overflow:hidden;font-family:'Liberation Serif',serif;font-size:16px;line-height:16px;color:#000;padding-bottom:5px">0005</div>
<div class="a" style="left:855px;top:489.90px;width:121px;overflow:hidden;font-family:'Liberation Serif',serif;font-size:16px;line-height:16px;color:#000;padding-bottom:5px">Гарсон</div>
<div class="a" style="right:217px;top:489.90px;font-size:16px;line-height:16px;color:#000;font-family:'Liberation Serif',serif;">1 100р.</div>
<div class="a" style="right:1180px;top:511.90px;font-size:16px;line-height:16px;color:#000;font-family:'Liberation Serif',serif;">2</div>
<div class="a" style="left:105px;top:511.90px;width:97px;overflow:hidden;font-family:'Liberation Serif',serif;font-size:16px;line-height:16px;color:#000;padding-bottom:5px">Котик</div>
<div class="a" style="left:204px;top:511.90px;width:101px;overflow:hidden;font-family:'Liberation Serif',serif;font-size:16px;line-height:16px;color:#000;padding-bottom:5px">Дементий</div>
<div class="a" style="left:307px;top:511.90px;width:98px;overflow:hidden;font-family:'Liberation Serif',serif;font-size:16px;line-height:16px;color:#000;padding-bottom:5px">Семенович</div>
<div class="a" style="left:407px;top:511.90px;width:239px;overflow:hidden;font-family:'Liberation Serif',serif;font-size:16px;line-height:16px;color:#000;padding-bottom:5px">Котик Дементий Семенович</div>
<div class="a" style="left:648px;top:511.90px;width:128px;overflow:hidden;font-family:'Liberation Serif',serif;font-size:16px;line-height:16px;color:#000;padding-bottom:5px">+7(911)930-21-36</div>
<div class="a" style="left:778px;top:511.90px;width:75px;overflow:hidden;font-family:'Liberation Serif',serif;font-size:16px;line-height:16px;color:#000;padding-bottom:5px">0015</div>
<div class="a" style="left:855px;top:511.90px;width:121px;overflow:hidden;font-family:'Liberation Serif',serif;font-size:16px;line-height:16px;color:#000;padding-bottom:5px">Кнот</div>
<div class="a" style="right:217px;top:511.90px;font-size:16px;line-height:16px;color:#000;font-family:'Liberation Serif',serif;">1 500р.</div>
<div class="a" style="right:1180px;top:533.90px;font-size:16px;line-height:16px;color:#000;font-family:'Liberation Serif',serif;">3</div>
<div class="a" style="left:105px;top:533.90px;width:97px;overflow:hidden;font-family:'Liberation Serif',serif;font-size:16px;line-height:16px;color:#000;padding-bottom:5px">Беленков</div>
<div class="a" style="left:204px;top:533.90px;width:101px;overflow:hidden;font-family:'Liberation Serif',serif;font-size:16px;line-height:16px;color:#000;padding-bottom:5px">Арсений</div>
<div class="a" style="left:307px;top:533.90px;width:98px;overflow:hidden;font-family:'Liberation Serif',serif;font-size:16px;line-height:16px;color:#000;padding-bottom:5px">Адрианович</div>
<div class="a" style="left:407px;top:533.90px;width:239px;overflow:hidden;font-family:'Liberation Serif',serif;font-size:16px;line-height:16px;color:#000;padding-bottom:5px">Беленков Арсений Адрианович</div>
<div class="a" style="left:648px;top:533.90px;width:128px;overflow:hidden;font-family:'Liberation Serif',serif;font-size:16px;line-height:16px;color:#000;padding-bottom:5px">+7(911)118-83-07</div>
<div class="a" style="left:778px;top:533.90px;width:75px;overflow:hidden;font-family:'Liberation Serif',serif;font-size:16px;line-height:16px;color:#000;padding-bottom:5px">0010</div>
<div class="a" style="left:855px;top:533.90px;width:121px;overflow:hidden;font-family:'Liberation Serif',serif;font-size:16px;line-height:16px;color:#000;padding-bottom:5px">Ежик</div>
<div class="a" style="right:217px;top:533.90px;font-size:16px;line-height:16px;color:#000;font-family:'Liberation Serif',serif;">1 800р.</div>
<div class="a" style="right:1180px;top:555.90px;font-size:16px;line-height:16px;color:#000;font-family:'Liberation Serif',serif;">4</div>
<div class="a" style="left:105px;top:555.90px;width:97px;overflow:hidden;font-family:'Liberation Serif',serif;font-size:16px;line-height:16px;color:#000;padding-bottom:5px">Гоминов</div>
<div class="a" style="left:204px;top:555.90px;width:101px;overflow:hidden;font-family:'Liberation Serif',serif;font-size:16px;line-height:16px;color:#000;padding-bottom:5px">Варфоломей</div>
<div class="a" style="left:307px;top:555.90px;width:98px;overflow:hidden;font-family:'Liberation Serif',serif;font-size:16px;line-height:16px;color:#000;padding-bottom:5px">Ираклиевич</div>
<div class="a" style="left:407px;top:555.90px;width:239px;overflow:hidden;font-family:'Liberation Serif',serif;font-size:16px;line-height:16px;color:#000;padding-bottom:5px">Гоминов Варфоломей Ираклиевич</div>
<div class="a" style="left:648px;top:555.90px;width:128px;overflow:hidden;font-family:'Liberation Serif',serif;font-size:16px;line-height:16px;color:#000;padding-bottom:5px">+7(911)423-11-22</div>
<div class="a" style="left:778px;top:555.90px;width:75px;overflow:hidden;font-family:'Liberation Serif',serif;font-size:16px;line-height:16px;color:#000;padding-bottom:5px">0011</div>
<div class="a" style="left:855px;top:555.90px;width:121px;overflow:hidden;font-family:'Liberation Serif',serif;font-size:16px;line-height:16px;color:#000;padding-bottom:5px">Каре</div>
<div class="a" style="right:217px;top:555.90px;font-size:16px;line-height:16px;color:#000;font-family:'Liberation Serif',serif;">1 200р.</div>
<div class="a" style="right:1180px;top:577.90px;font-size:16px;line-height:16px;color:#000;font-family:'Liberation Serif',serif;">5</div>
<div class="a" style="left:105px;top:577.90px;width:97px;overflow:hidden;font-family:'Liberation Serif',serif;font-size:16px;line-height:16px;color:#000;padding-bottom:5px">Рытова</div>
<div class="a" style="left:204px;top:577.90px;width:101px;overflow:hidden;font-family:'Liberation Serif',serif;font-size:16px;line-height:16px;color:#000;padding-bottom:5px">Жанна</div>
<div class="a" style="left:307px;top:577.90px;width:98px;overflow:hidden;font-family:'Liberation Serif',serif;font-size:16px;line-height:16px;color:#000;padding-bottom:5px">Анатолиевна</div>
<div class="a" style="left:407px;top:577.90px;width:239px;overflow:hidden;font-family:'Liberation Serif',serif;font-size:16px;line-height:16px;color:#000;padding-bottom:5px">Рытова Жанна Анатолиевна</div>
<div class="a" style="left:648px;top:577.90px;width:128px;overflow:hidden;font-family:'Liberation Serif',serif;font-size:16px;line-height:16px;color:#000;padding-bottom:5px">+7(911)476-89-65</div>
<div class="a" style="left:778px;top:577.90px;width:75px;overflow:hidden;font-family:'Liberation Serif',serif;font-size:16px;line-height:16px;color:#000;padding-bottom:5px">0008</div>
<div class="a" style="left:855px;top:577.90px;width:121px;overflow:hidden;font-family:'Liberation Serif',serif;font-size:16px;line-height:16px;color:#000;padding-bottom:5px">Лесенка</div>
<div class="a" style="right:217px;top:577.90px;font-size:16px;line-height:16px;color:#000;font-family:'Liberation Serif',serif;">1 900р.</div>
<div class="a" style="right:1180px;top:599.90px;font-size:16px;line-height:16px;color:#000;font-family:'Liberation Serif',serif;">1</div>
<div class="a" style="left:105px;top:599.90px;width:97px;overflow:hidden;font-family:'Liberation Serif',serif;font-size:16px;line-height:16px;color:#000;padding-bottom:5px">Минеев</div>
<div class="a" style="left:204px;top:599.90px;width:101px;overflow:hidden;font-family:'Liberation Serif',serif;font-size:16px;line-height:16px;color:#000;padding-bottom:5px">Остап</div>
<div class="a" style="left:307px;top:599.90px;width:98px;overflow:hidden;font-family:'Liberation Serif',serif;font-size:16px;line-height:16px;color:#000;padding-bottom:5px">Емельянов</div>
<div class="a" style="left:407px;top:599.90px;width:239px;overflow:hidden;font-family:'Liberation Serif',serif;font-size:16px;line-height:16px;color:#000;padding-bottom:5px">Минеев Остап Емельянов</div>
<div class="a" style="left:648px;top:599.90px;width:128px;overflow:hidden;font-family:'Liberation Serif',serif;font-size:16px;line-height:16px;color:#000;padding-bottom:5px">+7(911)966-64-10</div>
<div class="a" style="left:778px;top:599.90px;width:75px;overflow:hidden;font-family:'Liberation Serif',serif;font-size:16px;line-height:16px;color:#000;padding-bottom:5px">0005</div>
<div class="a" style="left:855px;top:599.90px;width:121px;overflow:hidden;font-family:'Liberation Serif',serif;font-size:16px;line-height:16px;color:#000;padding-bottom:5px">Гарсон</div>
<div class="a" style="right:217px;top:599.90px;font-size:16px;line-height:16px;color:#000;font-family:'Liberation Serif',serif;">1 100р.</div>
<div class="a" style="right:1180px;top:621.90px;font-size:16px;line-height:16px;color:#000;font-family:'Liberation Serif',serif;">2</div>
<div class="a" style="left:105px;top:621.90px;width:97px;overflow:hidden;font-family:'Liberation Serif',serif;font-size:16px;line-height:16px;color:#000;padding-bottom:5px">Котик</div>
<div class="a" style="left:204px;top:621.90px;width:101px;overflow:hidden;font-family:'Liberation Serif',serif;font-size:16px;line-height:16px;color:#000;padding-bottom:5px">Дементий</div>
<div class="a" style="left:307px;top:621.90px;width:98px;overflow:hidden;font-family:'Liberation Serif',serif;font-size:16px;line-height:16px;color:#000;padding-bottom:5px">Семенович</div>
<div class="a" style="left:407px;top:621.90px;width:239px;overflow:hidden;font-family:'Liberation Serif',serif;font-size:16px;line-height:16px;color:#000;padding-bottom:5px">Котик Дементий Семенович</div>
<div class="a" style="left:648px;top:621.90px;width:128px;overflow:hidden;font-family:'Liberation Serif',serif;font-size:16px;line-height:16px;color:#000;padding-bottom:5px">+7(911)930-21-36</div>
<div class="a" style="left:778px;top:621.90px;width:75px;overflow:hidden;font-family:'Liberation Serif',serif;font-size:16px;line-height:16px;color:#000;padding-bottom:5px">0015</div>
<div class="a" style="left:855px;top:621.90px;width:121px;overflow:hidden;font-family:'Liberation Serif',serif;font-size:16px;line-height:16px;color:#000;padding-bottom:5px">Кнот</div>
<div class="a" style="right:217px;top:621.90px;font-size:16px;line-height:16px;color:#000;font-family:'Liberation Serif',serif;">1 500р.</div>
<div class="a" style="right:1180px;top:643.90px;font-size:16px;line-height:16px;color:#000;font-family:'Liberation Serif',serif;">3</div>
<div class="a" style="left:105px;top:643.90px;width:97px;overflow:hidden;font-family:'Liberation Serif',serif;font-size:16px;line-height:16px;color:#000;padding-bottom:5px">Беленков</div>
<div class="a" style="left:204px;top:643.90px;width:101px;overflow:hidden;font-family:'Liberation Serif',serif;font-size:16px;line-height:16px;color:#000;padding-bottom:5px">Арсений</div>
<div class="a" style="left:307px;top:643.90px;width:98px;overflow:hidden;font-family:'Liberation Serif',serif;font-size:16px;line-height:16px;color:#000;padding-bottom:5px">Адрианович</div>
<div class="a" style="left:407px;top:643.90px;width:239px;overflow:hidden;font-family:'Liberation Serif',serif;font-size:16px;line-height:16px;color:#000;padding-bottom:5px">Беленков Арсений Адрианович</div>
<div class="a" style="left:648px;top:643.90px;width:128px;overflow:hidden;font-family:'Liberation Serif',serif;font-size:16px;line-height:16px;color:#000;padding-bottom:5px">+7(911)118-83-07</div>
<div class="a" style="left:778px;top:643.90px;width:75px;overflow:hidden;font-family:'Liberation Serif',serif;font-size:16px;line-height:16px;color:#000;padding-bottom:5px">0010</div>
<div class="a" style="left:855px;top:643.90px;width:121px;overflow:hidden;font-family:'Liberation Serif',serif;font-size:16px;line-height:16px;color:#000;padding-bottom:5px">Ежик</div>
<div class="a" style="right:217px;top:643.90px;font-size:16px;line-height:16px;color:#000;font-family:'Liberation Serif',serif;">1 800р.</div>
<div class="a" style="right:1180px;top:665.90px;font-size:16px;line-height:16px;color:#000;font-family:'Liberation Serif',serif;">1</div>
<div class="a" style="left:105px;top:665.90px;width:97px;overflow:hidden;font-family:'Liberation Serif',serif;font-size:16px;line-height:16px;color:#000;padding-bottom:5px">Минеев</div>
<div class="a" style="left:204px;top:665.90px;width:101px;overflow:hidden;font-family:'Liberation Serif',serif;font-size:16px;line-height:16px;color:#000;padding-bottom:5px">Остап</div>
<div class="a" style="left:307px;top:665.90px;width:98px;overflow:hidden;font-family:'Liberation Serif',serif;font-size:16px;line-height:16px;color:#000;padding-bottom:5px">Емельянов</div>
<div class="a" style="left:407px;top:665.90px;width:239px;overflow:hidden;font-family:'Liberation Serif',serif;font-size:16px;line-height:16px;color:#000;padding-bottom:5px">Минеев Остап Емельянов</div>
<div class="a" style="left:648px;top:665.90px;width:128px;overflow:hidden;font-family:'Liberation Serif',serif;font-size:16px;line-height:16px;color:#000;padding-bottom:5px">+7(911)966-64-10</div>
<div class="a" style="left:778px;top:665.90px;width:75px;overflow:hidden;font-family:'Liberation Serif',serif;font-size:16px;line-height:16px;color:#000;padding-bottom:5px">0013</div>
<div class="a" style="left:855px;top:665.90px;width:121px;overflow:hidden;font-family:'Liberation Serif',serif;font-size:16px;line-height:16px;color:#000;padding-bottom:5px">Канадка</div>
<div class="a" style="right:217px;top:665.90px;font-size:16px;line-height:16px;color:#000;font-family:'Liberation Serif',serif;">2 500р.</div>
<div class="a" style="right:1180px;top:687.90px;font-size:16px;line-height:16px;color:#000;font-family:'Liberation Serif',serif;">5</div>
<div class="a" style="left:105px;top:687.90px;width:97px;overflow:hidden;font-family:'Liberation Serif',serif;font-size:16px;line-height:16px;color:#000;padding-bottom:5px">Рытова</div>
<div class="a" style="left:204px;top:687.90px;width:101px;overflow:hidden;font-family:'Liberation Serif',serif;font-size:16px;line-height:16px;color:#000;padding-bottom:5px">Жанна</div>
<div class="a" style="left:307px;top:687.90px;width:98px;overflow:hidden;font-family:'Liberation Serif',serif;font-size:16px;line-height:16px;color:#000;padding-bottom:5px">Анатолиевна</div>
<div class="a" style="left:407px;top:687.90px;width:239px;overflow:hidden;font-family:'Liberation Serif',serif;font-size:16px;line-height:16px;color:#000;padding-bottom:5px">Рытова Жанна Анатолиевна</div>
<div class="a" style="left:648px;top:687.90px;width:128px;overflow:hidden;font-family:'Liberation Serif',serif;font-size:16px;line-height:16px;color:#000;padding-bottom:5px">+7(911)476-89-65</div>
<div class="a" style="left:778px;top:687.90px;width:75px;overflow:hidden;font-family:'Liberation Serif',serif;font-size:16px;line-height:16px;color:#000;padding-bottom:5px">0008</div>
<div class="a" style="left:855px;top:687.90px;width:121px;overflow:hidden;font-family:'Liberation Serif',serif;font-size:16px;line-height:16px;color:#000;padding-bottom:5px">Лесенка</div>
<div class="a" style="right:217px;top:687.90px;font-size:16px;line-height:16px;color:#000;font-family:'Liberation Serif',serif;">1 900р.</div>
<svg class="a" style="left:1066px;top:701px" width="5" height="5"><polygon points="5,0 5,5 0,5" fill="#5b8fd0"/></svg>
<div class="a" style="left:774px;top:265px;width:80px;height:24px;border:2px solid #217346;background:transparent"></div>
<div class="a" style="left:849px;top:285px;width:7px;height:6px;background:#217346;border-left:1px solid #fff;border-top:1px solid #fff"></div>
<div class="a" style="left:853px;top:270px;width:17px;height:17px;background:#f3f3f3;border:1px solid #c6c6c6"></div>
<svg class="a" style="left:857px;top:276px" width="9" height="5"><polygon points="0,0 8,0 4,4" fill="#555"/></svg>
<div class="a" style="left:0px;top:0px;width:1280px;height:59px;background:#217346"></div>
<div class="a" style="left:669px;top:0px;width:119px;height:59px;background:#1e6b40"></div>
<div class="a" style="left:788px;top:0;width:492px;height:36px;overflow:hidden;background:#237549"><div style="position:absolute;left:12px;top:2px;width:34px;height:36px;border-radius:17px;background:#1f6b40"></div><div style="position:absolute;left:50px;top:12px;width:28px;height:22px;border-radius:11px;background:#1f6b40"></div><div style="position:absolute;left:100px;top:14px;width:60px;height:25px;border-radius:12px;background:#1f6b40"></div><div style="position:absolute;left:117px;top:1px;width:70px;height:37px;border-radius:30px;background:#1f6b40"></div><div style="position:absolute;left:215px;top:0px;width:142px;height:36px;border-radius:0px;background:#1f6b40"></div><div style="position:absolute;left:407px;top:22px;width:45px;height:24px;border-radius:14px;background:#1f6b40"></div></div>
<div class="a" style="left:788px;top:36px;width:222px;height:23px;background:#237a4b"></div>
<div class="a" style="left:1010px;top:36px;width:139px;height:23px;background:#217045"></div>
<div class="a" style="left:1264px;top:36px;width:16px;height:23px;background:#217045"></div>
<div class="a" style="left:669px;top:0px;width:119px;height:59px;background:#1e6b40"></div>
<svg class="a" style="left:22px;top:8px" width="14" height="14"><path d="M0 0h14v12.5l-1.5 1.5H1.5L0 12.5z" fill="#fff"/><rect x="2" y="1.2" width="10" height="5.8" fill="#217346"/><rect x="3" y="9" width="8" height="4" fill="#217346"/><rect x="5" y="11" width="2" height="3" fill="#fff"/></svg>
<svg class="a" style="left:50px;top:7px" width="18" height="16"><path d="M3 5.5h7a3.9 3.9 0 0 1 0 7.8H8" fill="none" stroke="#fff" stroke-width="2.1"/><path d="M6 2L2.3 5.5 6 9" fill="none" stroke="#fff" stroke-width="2.3"/></svg>
<svg class="a" style="left:70.5px;top:13px" width="6" height="4"><polygon points="0,0 5.5,0 2.75,3" fill="#fff"/></svg>
<svg class="a" style="left:85px;top:7px" width="18" height="16"><path d="M15 5.5H8a3.9 3.9 0 0 0 0 7.8h2" fill="none" stroke="#5e9c77" stroke-width="2.1"/><path d="M12 2L15.7 5.5 12 9" fill="none" stroke="#5e9c77" stroke-width="2.3"/></svg>
<svg class="a" style="left:105.5px;top:13px" width="6" height="4"><polygon points="0,0 5.5,0 2.75,3" fill="#5e9c77"/></svg>
<svg class="a" style="left:124.5px;top:13.5px" width="6" height="8"><rect x="0" y="0.5" width="6" height="1.2" fill="#fff"/><polygon points="0,3 6,3 3,6.5" fill="#fff"/></svg>
<div class="a" style="left:269px;top:11.00px;font-size:13px;line-height:13px;color:#c3d9cb;font-family:'Liberation Sans',sans-serif;transform:scaleX(0.8911);transform-origin:left;">ИСИТ 3 лр.xlsx - Excel (Сбой активации продукта)</div>
<div class="a" style="left:675px;top:11.00px;font-size:13px;line-height:13px;color:#c3d9cb;font-family:'Liberation Sans',sans-serif;transform:scaleX(0.8753);transform-origin:left;">Работа с таблицами</div>
<svg class="a" style="left:1111px;top:9px" width="16" height="13"><rect x="0.5" y="0.5" width="14" height="11" fill="none" stroke="#5e9c77"/><path d="M0.5 3h14" stroke="#5e9c77"/><path d="M7.5 10V5M5 7.5l2.5-2.5 2.5 2.5" fill="none" stroke="#5e9c77"/></svg>
<div class="a" style="left:1159px;top:15px;width:11px;height:1px;background:#5e9c77"></div>
<svg class="a" style="left:1205px;top:9px" width="12" height="12"><rect x="0.5" y="3" width="8" height="8" fill="none" stroke="#5e9c77"/><path d="M3 3V0.5h8v8H8.5" fill="none" stroke="#5e9c77"/></svg>
<svg class="a" style="left:1251px;top:9px" width="12" height="12"><path d="M0.5 0.5l11 11M11.5 0.5l-11 11" stroke="#5e9c77" stroke-width="1.1"/></svg>
<div class="a" style="left:426px;top:35px;width:70px;height:24px;background:#f1f1f1"></div>
<div class="a" style="left:15px;top:41.00px;font-size:13px;line-height:13px;color:#fff;font-family:'Liberation Sans',sans-serif;transform:scaleX(0.9071);transform-origin:left;">Файл</div>
<div class="a" style="left:76.5px;top:41.00px;font-size:13px;line-height:13px;color:#fff;font-family:'Liberation Sans',sans-serif;transform:scaleX(0.8690);transform-origin:left;">Главная</div>
<div class="a" style="left:149.5px;top:41.00px;font-size:13px;line-height:13px;color:#fff;font-family:'Liberation Sans',sans-serif;transform:scaleX(0.8587);transform-origin:left;">Вставка</div>
<div class="a" style="left:220.5px;top:41.00px;font-size:13px;line-height:13px;color:#fff;font-family:'Liberation Sans',sans-serif;transform:scaleX(0.8988);transform-origin:left;">Разметка страницы</div>
<div class="a" style="left:356px;top:41.00px;font-size:13px;line-height:13px;color:#fff;font-family:'Liberation Sans',sans-serif;transform:scaleX(0.9544);transform-origin:left;">Формулы</div>
<div class="a" style="left:511.3px;top:41.00px;font-size:13px;line-height:13px;color:#fff;font-family:'Liberation Sans',sans-serif;transform:scaleX(0.9065);transform-origin:left;">Рецензирование</div>
<div class="a" style="left:631.4px;top:41.00px;font-size:13px;line-height:13px;color:#fff;font-family:'Liberation Sans',sans-serif;transform:scaleX(0.8287);transform-origin:left;">Вид</div>
<div class="a" style="left:693.6px;top:41.00px;font-size:13px;line-height:13px;color:#fff;font-family:'Liberation Sans',sans-serif;transform:scaleX(0.9309);transform-origin:left;">Конструктор</div>
<div class="a" style="left:439px;top:41.00px;font-size:13px;line-height:13px;color:#217346;font-family:'Liberation Sans',sans-serif;transform:scaleX(0.9155);transform-origin:left;">Данные</div>
<svg class="a" style="left:802px;top:39px" width="12" height="15"><path d="M6 1a4.6 4.6 0 0 0-2.6 8.4c.5.4.8 1 .8 1.6v.8h3.6V11c0-.6.3-1.2.8-1.6A4.6 4.6 0 0 0 6 1z" fill="none" stroke="#fff" stroke-width="1.1"/><path d="M4 13.2h4M4.5 14.5h3" stroke="#fff" stroke-width="1"/></svg>
<div class="a" style="left:820.4px;top:41.00px;font-size:13px;line-height:13px;color:#e6efe9;font-family:'Liberation Sans',sans-serif;transform:scaleX(0.8732);transform-origin:left;">Что вы хотите сделать?</div>
<svg class="a" style="left:1025px;top:39px" width="17" height="15"><polygon points="8.5,0.5 16.5,14 0.5,14" fill="#eac27f"/><rect x="7.7" y="4.5" width="1.7" height="5.5" fill="#3a3a3a"/><rect x="7.7" y="11" width="1.7" height="1.7" fill="#3a3a3a"/></svg>
<div class="a" style="left:1046px;top:41.00px;font-size:13px;line-height:13px;color:#fff;font-family:'Liberation Sans',sans-serif;transform:scaleX(0.8825);transform-origin:left;">ysveta99@mail.ru</div>
<div class="a" style="left:1149px;top:35px;width:115px;height:24px;background:#185c37"></div>
<svg class="a" style="left:1154px;top:38px" width="18" height="18"><circle cx="8" cy="5.5" r="4.3" fill="none" stroke="#fff" stroke-width="1.3"/><path d="M1 17c0-4 3-7 7-7 1.2 0 2.2.3 3 .8" fill="none" stroke="#fff" stroke-width="1.3"/><path d="M13.5 10.5v7M10 14h7" stroke="#fff" stroke-width="1.3"/></svg>
<div class="a" style="left:1175.2px;top:41.00px;font-size:13px;line-height:13px;color:#fff;font-family:'Liberation Sans',sans-serif;transform:scaleX(0.9216);transform-origin:left;">Общий доступ</div>
<div class="a" style="left:0px;top:59px;width:1280px;height:92px;background:#f1f1f1"></div>
<div class="a" style="left:0px;top:151px;width:1280px;height:1px;background:#d5d5d5"></div>
<div class="a" style="left:106px;top:63px;width:1px;height:84px;background:#d5d5d5"></div>
<div class="a" style="left:318px;top:63px;width:1px;height:84px;background:#d5d5d5"></div>
<div class="a" style="left:502px;top:63px;width:1px;height:84px;background:#d5d5d5"></div>
<div class="a" style="left:777px;top:63px;width:1px;height:84px;background:#d5d5d5"></div>
<div class="a" style="left:901px;top:63px;width:1px;height:84px;background:#d5d5d5"></div>
<div class="a" style="left:1039px;top:63px;width:1px;height:84px;background:#d5d5d5"></div>
<div class="a" style="left:1220px;top:63px;width:1px;height:84px;background:#d5d5d5"></div>
<div class="a" style="left:605px;top:66px;width:1px;height:60px;background:#e1e1e1"></div>
<div class="a" style="left:142.5px;top:136.84px;font-size:12px;line-height:12px;color:#5a5a5a;font-family:'Liberation Sans',sans-serif;transform:scaleX(0.9774);transform-origin:left;">Скачать &amp; преобразовать</div>
<div class="a" style="left:373.3px;top:136.84px;font-size:12px;line-height:12px;color:#5a5a5a;font-family:'Liberation Sans',sans-serif;transform:scaleX(0.9747);transform-origin:left;">Подключения</div>
<div class="a" style="left:580px;top:136.84px;font-size:12px;line-height:12px;color:#5a5a5a;font-family:'Liberation Sans',sans-serif;transform:scaleX(0.9726);transform-origin:left;">Сортировка и фильтр</div>
<div class="a" style="left:790.5px;top:136.84px;font-size:12px;line-height:12px;color:#5a5a5a;font-family:'Liberation Sans',sans-serif;transform:scaleX(0.9340);transform-origin:left;">Работа с данными</div>
<div class="a" style="left:947.5px;top:136.84px;font-size:12px;line-height:12px;color:#5a5a5a;font-family:'Liberation Sans',sans-serif;transform:scaleX(0.9993);transform-origin:left;">Прогноз</div>
<div class="a" style="left:1095px;top:136.84px;font-size:12px;line-height:12px;color:#5a5a5a;font-family:'Liberation Sans',sans-serif;transform:scaleX(0.9186);transform-origin:left;">Структура</div>
<svg class="a" style="left:1208px;top:140px" width="8" height="7"><path d="M0.5 6V0.5H6" fill="none" stroke="#a8a8a8" stroke-width="1"/><path d="M3 3l3.5 3.5M7 4v3H4" fill="none" stroke="#a8a8a8" stroke-width="1"/></svg>
<svg class="a" style="left:1260px;top:139px" width="11" height="7"><path d="M1 6l4.5-4.5L10 6" fill="none" stroke="#6a6a6a" stroke-width="1.6"/></svg>
<div class="a" style="left:37px;top:63px;width:30px;height:30px;background:#fafafa;border:1px solid #c8c8c8"></div>
<svg class="a" style="left:46px;top:70px" width="17" height="17"><path d="M1.5 1.5h7l3 3v10h-10z" fill="#fff" stroke="#6a6a6a" stroke-width="1.1"/><path d="M8.5 1.5v3h3" fill="none" stroke="#6a6a6a"/><path d="M3 5.5h4M3 7.5h4M3 9.5h4M3 11.5h4" stroke="#8a8a8a"/><path d="M8 7v7.2c0 .9 1.6 1.6 3.5 1.6s3.5-.7 3.5-1.6V7z" fill="#e8b866"/><ellipse cx="11.5" cy="7" rx="3.5" ry="1.4" fill="#e8b866"/><path d="M8 8.6c0 .9 1.6 1.6 3.5 1.6s3.5-.7 3.5-1.6" fill="none" stroke="#fff" stroke-width=".8"/></svg>
<div class="a" style="left:22.5px;top:99.84px;font-size:12px;line-height:12px;color:#262626;font-family:'Liberation Sans',sans-serif;transform:scaleX(1.0005);transform-origin:left;">Получение</div>
<div class="a" style="left:3.5px;top:115.84px;font-size:12px;line-height:12px;color:#262626;font-family:'Liberation Sans',sans-serif;transform:scaleX(0.9783);transform-origin:left;">внешних данных</div>
<svg class="a" style="left:98px;top:121px" width="6" height="4"><polygon points="0,0 5,0 2.5,3" fill="#555"/></svg>
<svg class="a" style="left:118px;top:64px" width="36" height="34"><path d="M8 1h5.5L9 8h4l-11.5 12 4-9.5H1.5z" fill="#e9b868"/><path d="M10 7v20c0 1.6 3.6 2.8 8 2.8s8-1.2 8-2.8V7z" fill="#7a7a7a"/><ellipse cx="18" cy="7" rx="8" ry="2.8" fill="#7a7a7a"/><path d="M10.3 8.6c.8 1.2 4 2.1 7.7 2.1s6.9-.9 7.7-2.1" fill="none" stroke="#fff" stroke-width=".9"/><rect x="13.5" y="16.5" width="22" height="17" fill="#fff"/><rect x="14.5" y="17.5" width="20" height="15" fill="#fff" stroke="#777"/><rect x="14" y="17" width="21" height="3.5" fill="#3f7ec4"/><path d="M15 24.5h19M15 28.5h19M21.2 20.5v12M27.8 20.5v12" stroke="#777"/></svg>
<div class="a" style="left:115.5px;top:102.84px;font-size:12px;line-height:12px;color:#262626;font-family:'Liberation Sans',sans-serif;transform:scaleX(0.9318);transform-origin:left;">Создать</div>
<div class="a" style="left:113px;top:118.34px;font-size:12px;line-height:12px;color:#262626;font-family:'Liberation Sans',sans-serif;transform:scaleX(0.9926);transform-origin:left;">запрос</div>
<svg class="a" style="left:154px;top:124px" width="6" height="4"><polygon points="0,0 5,0 2.5,3" fill="#555"/></svg>
<svg class="a" style="left:165px;top:65px" width="16" height="15"><rect x="0.5" y="0.5" width="15" height="14" fill="#fff" stroke="#6f6f6f"/><rect x="0" y="0" width="16" height="3" fill="#3f7ec4"/><path d="M0.5 6.3h15M10.5 6.3v8" stroke="#8f8f8f"/><path d="M7 4.5h1M9 4.5h1M11 4.5h1M13 4.5h1M12 8.5h2M12 10.5h2M12 12.5h2" stroke="#8f8f8f"/></svg>
<div class="a" style="left:184.5px;top:68.09px;font-size:12px;line-height:12px;color:#262626;font-family:'Liberation Sans',sans-serif;transform:scaleX(0.9827);transform-origin:left;">Показать запросы</div>
<svg class="a" style="left:165px;top:88px" width="16" height="16"><rect x="0.5" y="0.5" width="15" height="15" fill="#fff" stroke="#6f6f6f"/><rect x="0" y="0" width="16" height="4" fill="#3f7ec4"/><path d="M2.5 2h2M7 2h2M11.5 2h2" stroke="#fff"/><path d="M1 6.5h14M1 9.5h14M1 12.5h14M5.5 4v11M10.5 4v11" stroke="#9a9a9a"/></svg>
<div class="a" style="left:184.5px;top:90.84px;font-size:12px;line-height:12px;color:#262626;font-family:'Liberation Sans',sans-serif;transform:scaleX(0.9877);transform-origin:left;">Из таблицы</div>
<svg class="a" style="left:165px;top:111px" width="17" height="17"><path d="M0.5 0.5h7.5l3 3v10H0.5z" fill="#fff" stroke="#6f6f6f"/><path d="M8 0.5v3h3" fill="none" stroke="#6f6f6f"/><circle cx="11.5" cy="11" r="4.5" fill="#fff" stroke="#3f7ec4" stroke-width="1.2"/><path d="M11.5 8.5v3h2.2" fill="none" stroke="#6f6f6f" stroke-width="1"/></svg>
<div class="a" style="left:184.5px;top:113.84px;font-size:12px;line-height:12px;color:#262626;font-family:'Liberation Sans',sans-serif;transform:scaleX(1.0057);transform-origin:left;">Последние источники</div>
<svg class="a" style="left:338px;top:66px" width="32" height="30"><path d="M1.2 24.7V1.2h14.8" fill="none" stroke="#bdbdbd" stroke-width="1.2"/><path d="M4.3 26.8V3.3h13.5" fill="none" stroke="#bdbdbd" stroke-width="1.2"/><path d="M7.2 28.7V5.2h12.3l5 5v5" fill="#f6f2f6" stroke="#b3b3b3" stroke-width="1.3"/><path d="M7.2 28.7h6" stroke="#b3b3b3" stroke-width="1.3"/><path d="M19.5 5.2v5h5" fill="none" stroke="#b3b3b3" stroke-width="1.2"/><path d="M17.5 22a5.8 5.8 0 0 1 10.5-3.3M28.5 24a5.8 5.8 0 0 1-10.5 3.3" fill="none" stroke="#bbbbbb" stroke-width="2.2"/><path d="M29.5 14.5v5.5h-5.5zM16.5 33v-5.5h5.5z" fill="#bbbbbb"/></svg>
<div class="a" style="left:325.5px;top:102.09px;font-size:12px;line-height:12px;color:#a6a6a6;font-family:'Liberation Sans',sans-serif;transform:scaleX(0.9799);transform-origin:left;">Обновить</div>
<div class="a" style="left:339.5px;top:117.59px;font-size:12px;line-height:12px;color:#a6a6a6;font-family:'Liberation Sans',sans-serif;transform:scaleX(0.9249);transform-origin:left;">все</div>
<svg class="a" style="left:360px;top:123px" width="6" height="4"><polygon points="0,0 5,0 2.5,3" fill="#b0b0b0"/></svg>
<svg class="a" style="left:385px;top:66px" width="16" height="14"><rect x="0.6" y="0.6" width="14" height="10" fill="#fff" stroke="#555" stroke-width="1.2"/><path d="M1 12.5h5.5M8.5 12.5h5.5" stroke="#666" stroke-width="1.3" stroke-linecap="round"/><circle cx="7.8" cy="5.8" r="2.6" fill="none" stroke="#3f7ec4" stroke-width="1.4"/><path d="M7.8 2.2v1.2M7.8 8.2v1.2M4.2 5.8h1.2M10.2 5.8h1.2" stroke="#3f7ec4" stroke-width="1.4"/></svg>
<div class="a" style="left:404.5px;top:68.09px;font-size:12px;line-height:12px;color:#262626;font-family:'Liberation Sans',sans-serif;transform:scaleX(1.0109);transform-origin:left;">Подключения</div>
<svg class="a" style="left:386px;top:88px" width="14" height="16"><rect x="0.6" y="0.6" width="12.8" height="14.8" fill="#f6f2f6" stroke="#b0b0b0" stroke-width="1.2"/><rect x="0" y="0" width="14" height="3" fill="#b0b0b0"/><circle cx="4" cy="6.5" r="1.3" fill="#b0b0b0"/><circle cx="4" cy="11.2" r="1.1" fill="none" stroke="#b0b0b0" stroke-width=".9"/><path d="M7 6.5h4.5M7 11.2h4.5" stroke="#b0b0b0" stroke-width="1.1"/></svg>
<div class="a" style="left:404.5px;top:90.84px;font-size:12px;line-height:12px;color:#a6a6a6;font-family:'Liberation Sans',sans-serif;transform:scaleX(0.9487);transform-origin:left;">Свойства</div>
<svg class="a" style="left:388px;top:112px" width="14" height="16"><path d="M0.6 13V0.6h7.5l2.6 2.6v7" fill="#f6f2f6" stroke="#b0b0b0" stroke-width="1.2"/><path d="M8 0.6v2.6h2.6" fill="none" stroke="#b0b0b0"/><path d="M5.5 12.5a2 2 0 0 1 2-2h2.5a2 2 0 0 1 0 4M8 14.5a2 2 0 0 1-2 2H3.5a2 2 0 0 1 0-4" fill="none" stroke="#b0b0b0" stroke-width="1.3"/></svg>
<div class="a" style="left:404.5px;top:113.84px;font-size:12px;line-height:12px;color:#a6a6a6;font-family:'Liberation Sans',sans-serif;transform:scaleX(0.9756);transform-origin:left;">Изменить связи</div>
<svg class="a" style="left:511px;top:72px" width="16" height="18"><text x="0" y="7.5" font-family="Liberation Sans" font-size="9" font-weight="bold" fill="#4c86c6">A</text><text x="0" y="15.5" font-family="Liberation Sans" font-size="9" font-weight="bold" fill="#8e4fb2">Я</text><path d="M11.5 1v14M8.8 12.3l2.7 2.9 2.7-2.9" fill="none" stroke="#666" stroke-width="1.1"/></svg>
<svg class="a" style="left:511px;top:102px" width="16" height="18"><text x="0" y="7.5" font-family="Liberation Sans" font-size="9" font-weight="bold" fill="#8e4fb2">Я</text><text x="0" y="15.5" font-family="Liberation Sans" font-size="9" font-weight="bold" fill="#4c86c6">A</text><path d="M11.5 1v14M8.8 12.3l2.7 2.9 2.7-2.9" fill="none" stroke="#666" stroke-width="1.1"/></svg>
<svg class="a" style="left:549px;top:68px" width="30" height="26"><rect x="0.6" y="0.6" width="28" height="24" rx="1" fill="#fff" stroke="#6f6f6f" stroke-width="1.2"/><rect x="0" y="0" width="29.2" height="4" fill="#3f7ec4"/><path d="M14.6 4v21" stroke="#6f6f6f" stroke-width="1.2"/><text x="7.3" y="13.3" text-anchor="middle" font-family="Liberation Sans" font-size="9.5" font-weight="bold" fill="#8a48ad">Я</text><text x="7.3" y="23.3" text-anchor="middle" font-family="Liberation Sans" font-size="9.5" font-weight="bold" fill="#3f7ec4">A</text><text x="21.9" y="13.3" text-anchor="middle" font-family="Liberation Sans" font-size="9.5" font-weight="bold" fill="#3f7ec4">A</text><text x="21.9" y="23.3" text-anchor="middle" font-family="Liberation Sans" font-size="9.5" font-weight="bold" fill="#8a48ad">Я</text></svg>
<div class="a" style="left:531.25px;top:102.09px;font-size:12px;line-height:12px;color:#262626;font-family:'Liberation Sans',sans-serif;transform:scaleX(0.9945);transform-origin:left;">Сортировка</div>
<div class="a" style="left:609px;top:62px;width:46px;height:69px;background:#c6c6c6"></div>
<svg class="a" style="left:618px;top:67px" width="28" height="28"><path d="M0 0H27V2.3L15.9 13.4V26.8H11.3V13.4L0 2.3z" fill="#7a7a7a"/><path d="M1.6 2.3L12.3 13V26.3" fill="none" stroke="#fff" stroke-width="1"/></svg>
<div class="a" style="left:611.25px;top:102.09px;font-size:12px;line-height:12px;color:#262626;font-family:'Liberation Sans',sans-serif;transform:scaleX(1.0047);transform-origin:left;">Фильтр</div>
<svg class="a" style="left:658px;top:65px" width="17" height="17"><path d="M0.5 0.5h12l-4.5 6v6l-3 2v-8z" fill="#b9b9b9"/><path d="M9.5 9.5l6 6M15.5 9.5l-6 6" stroke="#b9b9b9" stroke-width="1.6"/></svg>
<div class="a" style="left:677.5px;top:68.09px;font-size:12px;line-height:12px;color:#a6a6a6;font-family:'Liberation Sans',sans-serif;transform:scaleX(0.9809);transform-origin:left;">Очистить</div>
<svg class="a" style="left:658px;top:88px" width="17" height="17"><path d="M0.5 0.5h12l-4.5 6v6l-3 2v-8z" fill="#b9b9b9"/><path d="M9 12a3.5 3.5 0 0 1 6.5-1.5M16 13a3.5 3.5 0 0 1-6.5 1.5" fill="none" stroke="#b9b9b9" stroke-width="1.3"/></svg>
<div class="a" style="left:677.5px;top:90.84px;font-size:12px;line-height:12px;color:#a6a6a6;font-family:'Liberation Sans',sans-serif;transform:scaleX(0.9944);transform-origin:left;">Повторить</div>
<svg class="a" style="left:658px;top:111px" width="17" height="17"><path d="M0.5 0.5h13l-5 6v7l-3 2v-9z" fill="#555"/><path d="M8 15.5l1-3 5.5-5.5 2 2-5.5 5.5z" fill="#4c86c6"/></svg>
<div class="a" style="left:677.5px;top:113.84px;font-size:12px;line-height:12px;color:#262626;font-family:'Liberation Sans',sans-serif;transform:scaleX(1.0072);transform-origin:left;">Дополнительно</div>
<svg class="a" style="left:794px;top:66px" width="33" height="27"><path d="M11 6.5C12.5 1.5 21 -0.5 23.5 6" fill="none" stroke="#3f7ec4" stroke-width="2"/><path d="M20 5.5l3.5 5.3 3.2-5.3z" fill="#3f7ec4"/><rect x="1.6" y="10.6" width="14" height="15" fill="#fff" stroke="#6f6f6f" stroke-width="1.2"/><path d="M4 13.5h9M4 16.5h9M4 19.5h9M4 22.5h9" stroke="#3f7ec4" stroke-width="1.1"/><rect x="18.6" y="13.6" width="12" height="10" fill="#fff" stroke="#6f6f6f" stroke-width="1.2"/><rect x="18" y="13" width="13.2" height="2.7" fill="#7a7a7a"/><path d="M24.6 15.7v8M18.6 19.5h12" stroke="#8a8a8a"/><path d="M20 17.7h3M26 17.7h3M20 21.5h3M26 21.5h3" stroke="#3f7ec4"/></svg>
<div class="a" style="left:788px;top:102.09px;font-size:12px;line-height:12px;color:#262626;font-family:'Liberation Sans',sans-serif;transform:scaleX(0.9793);transform-origin:left;">Текст по</div>
<div class="a" style="left:783.25px;top:117.59px;font-size:12px;line-height:12px;color:#262626;font-family:'Liberation Sans',sans-serif;transform:scaleX(1.0009);transform-origin:left;">столбцам</div>
<svg class="a" style="left:843px;top:66px" width="17" height="16"><rect x="0.6" y="0.6" width="14" height="12" fill="#fff" stroke="#6f6f6f" stroke-width="1.2"/><path d="M0.6 4.5h14M0.6 8.5h14" stroke="#b0b0b0"/><path d="M2 2.5h2M11 2.5h2M2 10.5h2M11 10.5h2" stroke="#9a9a9a"/><rect x="4.5" y="3.3" width="6" height="3" rx="1" fill="#fff" stroke="#4aa27c" stroke-width="1.1"/><path d="M12 6l-3.3 5h2.3l-1.8 4.8 5.5-6.3h-2.4l2.3-3.5z" fill="#ecbb66"/></svg>
<svg class="a" style="left:843px;top:89px" width="17" height="15"><rect x="0.6" y="0.6" width="4.5" height="13.5" fill="#fff" stroke="#666" stroke-width="1.2"/><rect x="1.2" y="1.2" width="3.3" height="3.1" fill="#3f7ec4"/><rect x="1.2" y="4.3" width="3.3" height="3.3" fill="#e9b868"/><rect x="1.2" y="7.6" width="3.3" height="3.1" fill="#3f7ec4"/><rect x="1.2" y="10.7" width="3.3" height="3.2" fill="#e9b868"/><rect x="11.6" y="0.6" width="4.5" height="13.5" fill="#fff" stroke="#666" stroke-width="1.2"/><rect x="12.2" y="1.2" width="3.3" height="3.1" fill="#3f7ec4"/><rect x="12.2" y="4.3" width="3.3" height="3.3" fill="#e9b868"/><path d="M12 7.6h4M12 10.7h4" stroke="#999"/><path d="M6 7h4M8.3 5.2L10 7 8.3 8.8" fill="none" stroke="#3f7ec4" stroke-width="1.1"/></svg>
<svg class="a" style="left:843px;top:111px" width="17" height="17"><rect x="0.6" y="3.6" width="9.5" height="3.8" fill="#fff" stroke="#777" stroke-width="1.1"/><rect x="0.6" y="10.6" width="9.5" height="3.8" fill="#fff" stroke="#777" stroke-width="1.1"/><path d="M8 3.5l2.3 2.3 5.5-5.3" fill="none" stroke="#4aa27c" stroke-width="1.5"/><circle cx="11.5" cy="12.3" r="3.5" fill="#fff" stroke="#d9472b" stroke-width="1.4"/><path d="M9.3 10.2l4.4 4.2" stroke="#d9472b" stroke-width="1.3"/></svg>
<svg class="a" style="left:865px;top:118px" width="6" height="4"><polygon points="0,0 5,0 2.5,3" fill="#666"/></svg>
<svg class="a" style="left:878px;top:66px" width="17" height="14"><rect x="0.6" y="0.6" width="4.6" height="12.5" fill="#fff" stroke="#666" stroke-width="1.2"/><path d="M0.6 3.7h4.6M0.6 6.8h4.6M0.6 9.9h4.6" stroke="#666"/><path d="M6.5 6.7h3.5M8.5 5l1.7 1.7-1.7 1.7" fill="none" stroke="#3f7ec4" stroke-width="1.1"/><rect x="11.6" y="4.1" width="4.8" height="5" fill="#fff" stroke="#d9472b" stroke-width="1.2"/><rect x="13.5" y="6" width="1" height="1.2" fill="#888"/></svg>
<svg class="a" style="left:878px;top:88px" width="17" height="16"><path d="M6 7l5-3.5M6 7l5 4.5" stroke="#777"/><rect x="0.6" y="4.6" width="5.5" height="5.5" fill="#fff" stroke="#666" stroke-width="1.1"/><rect x="0" y="4" width="6.7" height="1.5" fill="#3f7ec4"/><rect x="10.6" y="0.6" width="5.5" height="5.5" fill="#fff" stroke="#666" stroke-width="1.1"/><rect x="10" y="0" width="6.7" height="1.5" fill="#3f7ec4"/><rect x="10.6" y="9.6" width="5" height="5.5" fill="#fff" stroke="#666" stroke-width="1.1"/><rect x="10" y="9" width="6.2" height="1.5" fill="#3f7ec4"/></svg>
<svg class="a" style="left:878px;top:111px" width="17" height="17"><path d="M2 1.5C4 0 12 0 14.5 1.5L15.5 3V13C15 14 12 16 8 16S1 14 0.5 13V3z" fill="#6cb33f"/><path d="M3.5 3.5C6 2.5 11 2.5 13.5 3.5" fill="none" stroke="#fff" stroke-width=".7"/><path d="M4.5 5v9M8 4.5v10M11.5 5v9M2 7.5h12M2 10.5h12" stroke="#c8e6b0" stroke-width=".8"/></svg>
<svg class="a" style="left:929px;top:68px" width="30" height="30"><rect x="0.6" y="0.6" width="25" height="24.5" fill="#fff" stroke="#777" stroke-width="1.1"/><path d="M0.6 5.5h25M0.6 10.5h25M0.6 15.5h25M0.6 20.5h25M5.6 0.6v24.5M10.6 0.6v24.5M15.6 0.6v24.5M20.6 0.6v24.5" stroke="#a8a8a8" stroke-width=".9"/><rect x="5.5" y="5.3" width="5.2" height="5.2" fill="#fff" stroke="#e8823a" stroke-width="1.2"/><rect x="5.5" y="15" width="5.2" height="5.2" fill="#fff" stroke="#e8823a" stroke-width="1.2"/><path d="M17.2 13.2a5.6 5.6 0 1 1 9.5 3.5c-1.8 1.7-3 2.3-3 5" fill="#fff" stroke="#fff" stroke-width="5"/><path d="M17.2 13.2a5.6 5.6 0 1 1 9.5 3.5c-1.8 1.7-3 2.3-3 5" fill="none" stroke="#3f7ec4" stroke-width="3"/><rect x="22" y="24.5" width="3.4" height="3.4" fill="#3f7ec4"/></svg>
<div class="a" style="left:908.3px;top:101.64px;font-size:12px;line-height:12px;color:#262626;font-family:'Liberation Sans',sans-serif;transform:scaleX(1.0014);transform-origin:left;">Анализ "что</div>
<div class="a" style="left:922.3px;top:117.14px;font-size:12px;line-height:12px;color:#262626;font-family:'Liberation Sans',sans-serif;transform:scaleX(1.0117);transform-origin:left;">если"</div>
<svg class="a" style="left:955px;top:123px" width="6" height="4"><polygon points="0,0 5,0 2.5,3" fill="#555"/></svg>
<svg class="a" style="left:992px;top:68px" width="29" height="25"><rect x="0.6" y="0.6" width="27" height="20" fill="#fff" stroke="#777" stroke-width="1.1"/><path d="M0.6 5.5h27M0.6 10.5h27M0.6 15.5h27M7.5 0.6v20M14.5 0.6v20M21 0.6v20" stroke="#b8b8b8" stroke-width=".9"/><path d="M1.5 23.5h7.5l2-2.5M11 23.5h7.5l2.5-2.5" fill="none" stroke="#999" stroke-width="1"/><path d="M1.5 19.5l5-5 3 2.5 4-4" fill="none" stroke="#3f7ec4" stroke-width="1.8"/><path d="M13.5 13l4-3.5 3 2 4.5-5" fill="none" stroke="#e0502f" stroke-width="1.8"/><path d="M21.5 5l5.5-2.5-1.2 6z" fill="#e0502f"/></svg>
<div class="a" style="left:992.6px;top:101.64px;font-size:12px;line-height:12px;color:#262626;font-family:'Liberation Sans',sans-serif;transform:scaleX(1.0047);transform-origin:left;">Лист</div>
<div class="a" style="left:980.2px;top:117.14px;font-size:12px;line-height:12px;color:#262626;font-family:'Liberation Sans',sans-serif;transform:scaleX(1.0166);transform-origin:left;">прогноза</div>
<svg class="a" style="left:1046px;top:66px" width="17" height="14"><path d="M2.5 0.5h-1v2M1.5 10.5v2h1" fill="none" stroke="#777"/><rect x="0.6" y="3.6" width="6" height="6" fill="#fff" stroke="#555" stroke-width="1.1"/><path d="M2 6.6h3M3.5 5v3.2" stroke="#555"/><rect x="8.6" y="0.6" width="7.5" height="12.5" fill="#fff" stroke="#555" stroke-width="1.1"/><path d="M10.3 3.5h4M10.3 6.8h4M10.3 10.1h4" stroke="#3f7ec4" stroke-width="1.1"/></svg>
<div class="a" style="left:1065.4px;top:67.84px;font-size:12px;line-height:12px;color:#262626;font-family:'Liberation Sans',sans-serif;transform:scaleX(1.0104);transform-origin:left;">Группировать</div>
<svg class="a" style="left:1152px;top:72px" width="6" height="4"><polygon points="0,0 5,0 2.5,3" fill="#555"/></svg>
<svg class="a" style="left:1046px;top:89px" width="17" height="14"><path d="M2.5 0.5h-1v2M1.5 10.5v2h1" fill="none" stroke="#777"/><rect x="0.6" y="3.6" width="6" height="6" fill="#fff" stroke="#e0502f" stroke-width="1.2"/><path d="M1.2 9l4.8-4.8" stroke="#e0502f" stroke-width="1.1"/><rect x="8.6" y="0.6" width="7.5" height="12.5" fill="#fff" stroke="#555" stroke-width="1.1"/><path d="M10.3 3.5h4M10.3 6.8h4M10.3 10.1h4" stroke="#3f7ec4" stroke-width="1.1"/></svg>
<div class="a" style="left:1065.4px;top:90.84px;font-size:12px;line-height:12px;color:#262626;font-family:'Liberation Sans',sans-serif;transform:scaleX(0.9945);transform-origin:left;">Разгруппировать</div>
<svg class="a" style="left:1169px;top:95px" width="6" height="4"><polygon points="0,0 5,0 2.5,3" fill="#555"/></svg>
<svg class="a" style="left:1046px;top:111px" width="17" height="17"><rect x="0.6" y="1.6" width="5" height="5" fill="#fafafa" stroke="#c0c0c0"/><rect x="0.6" y="9.6" width="5" height="5" fill="#fafafa" stroke="#c0c0c0"/><path d="M1.8 4.1h2.6M3.1 2.8v2.6M1.8 12.1h2.6M3.1 10.8v2.6" stroke="#c0c0c0"/><rect x="7.6" y="0.6" width="8.5" height="15" fill="#fafafa" stroke="#c0c0c0"/><path d="M7.6 4.5h8.5M7.6 8h8.5M7.6 11.5h8.5M11.8 0.6v15" stroke="#c8c8c8"/></svg>
<div class="a" style="left:1065.4px;top:113.84px;font-size:12px;line-height:12px;color:#a6a6a6;font-family:'Liberation Sans',sans-serif;transform:scaleX(1.0370);transform-origin:left;">Промежуточный итог</div>
<svg class="a" style="left:1197px;top:65px" width="16" height="16"><path d="M7 1.5h8M7 7.5h8M7 13.5h8" stroke="#a8a8a8" stroke-width="1"/><path d="M11 3.5h4M11 5.5h4M11 9.5h4M11 11.5h4" stroke="#bdbdbd" stroke-width=".8"/><path d="M1 5h5.5M3.75 2.2v5.6" stroke="#b5b5b5" stroke-width="1.5"/></svg>
<svg class="a" style="left:1197px;top:88px" width="16" height="16"><path d="M7 1.5h8M7 7.5h8M7 13.5h8" stroke="#a8a8a8" stroke-width="1"/><path d="M11 3.5h4M11 5.5h4M11 9.5h4M11 11.5h4" stroke="#bdbdbd" stroke-width=".8"/><path d="M1 5h5.5" stroke="#b5b5b5" stroke-width="1.8"/></svg>
<div class="a" style="left:0px;top:152px;width:1280px;height:47px;background:#e6e6e6"></div>
<div class="a" style="left:5px;top:162px;width:102px;height:26px;background:#fff;border:1px solid #c6c6c6"></div>
<div class="a" style="left:12px;top:169.20px;font-size:13px;line-height:13px;color:#262626;font-family:'Liberation Sans',sans-serif;transform:scaleX(0.9225);transform-origin:left;">G2</div>
<svg class="a" style="left:93px;top:172px" width="8" height="5"><polygon points="0,0 7.5,0 3.75,4.5" fill="#666"/></svg>
<div class="a" style="left:121px;top:170px;width:2px;height:2px;background:#a8a8a8"></div>
<div class="a" style="left:121px;top:174px;width:2px;height:2px;background:#a8a8a8"></div>
<div class="a" style="left:121px;top:178px;width:2px;height:2px;background:#a8a8a8"></div>
<div class="a" style="left:137px;top:162px;width:110px;height:26px;background:#fff;border:1px solid #c6c6c6"></div>
<svg class="a" style="left:150px;top:170px" width="12" height="11"><path d="M1 0.5l10 10M11 0.5l-10 10" stroke="#b4b4b4" stroke-width="1.4"/></svg>
<svg class="a" style="left:185px;top:170px" width="15" height="11"><path d="M1 5.5l4 4.5 9-9.5" fill="none" stroke="#b4b4b4" stroke-width="1.8"/></svg>
<div class="a" style="left:222px;top:167px;font-family:'Liberation Serif',serif;font-style:italic;font-weight:bold;font-size:13px;line-height:16px;color:#555">f<span style="font-size:10px">x</span></div>
<div class="a" style="left:250px;top:162px;width:1025px;height:26px;background:#fff;border:1px solid #c6c6c6"></div>
<div class="a" style="left:262px;top:169.20px;font-size:13px;line-height:13px;color:#262626;font-family:'Liberation Sans',sans-serif;">5</div>
<svg class="a" style="left:1262px;top:172px" width="9" height="6"><path d="M0.5 0.5l4 4 4-4" fill="none" stroke="#a0a0a0" stroke-width="1.2"/></svg>
<div class="a" style="left:1258px;top:199px;width:22px;height:775px;background:#e6e6e6"></div>
<div class="a" style="left:1258px;top:218px;width:1px;height:756px;background:#a8a8a8"></div>
<div class="a" style="left:29px;top:971px;width:1229px;height:2px;background:#fff"></div>
<div class="a" style="left:0px;top:971px;width:28px;height:2px;background:#e6e6e6"></div>
<div class="a" style="left:28px;top:971px;width:1px;height:2px;background:#ababab"></div>
<div class="a" style="left:0px;top:973px;width:1259px;height:1px;background:#a8a8a8"></div>
<div class="a" style="left:1262px;top:200px;width:15px;height:15px;background:#fff;border:1px solid #a8a8a8"></div>
<svg class="a" style="left:1265px;top:205px" width="9" height="5"><polygon points="4.5,0 9,5 0,5" fill="#666"/></svg>
<div class="a" style="left:1262px;top:215px;width:15px;height:721px;background:#fff;border:1px solid #a8a8a8"></div>
<div class="a" style="left:1263px;top:936px;width:13px;height:23px;background:#dadada"></div>
<div class="a" style="left:1262px;top:959px;width:15px;height:15px;background:#fff;border:1px solid #a8a8a8"></div>
<svg class="a" style="left:1265px;top:964px" width="9" height="5"><polygon points="0,0 9,0 4.5,5" fill="#666"/></svg>
<div class="a" style="left:0px;top:974px;width:1280px;height:27px;background:#e6e6e6"></div>
<div class="a" style="left:0px;top:1001px;width:1280px;height:1px;background:#c8c8c8"></div>
<svg class="a" style="left:26px;top:983px" width="6" height="9"><polygon points="5,0 5,8 0,4" fill="#c0c0c0"/></svg>
<svg class="a" style="left:56px;top:983px" width="6" height="9"><polygon points="0,0 0,8 5,4" fill="#c0c0c0"/></svg>
<div class="a" style="left:100px;top:973px;width:81px;height:24px;background:#fff;border-left:1px solid #a8a8a8;border-right:1px solid #a8a8a8"></div>
<div class="a" style="left:100px;top:996px;width:81px;height:2px;background:#217346"></div>
<div class="a" style="left:112px;top:980.00px;font-size:13px;line-height:13px;color:#217346;font-family:'Liberation Sans',sans-serif;font-weight:bold;transform:scaleX(0.9692);transform-origin:left;">Клиенты</div>
<div class="a" style="left:195.5px;top:980.00px;font-size:13px;line-height:13px;color:#444;font-family:'Liberation Sans',sans-serif;transform:scaleX(0.9517);transform-origin:left;">Стрижки</div>
<div class="a" style="left:260px;top:977px;width:1px;height:20px;background:#a8a8a8"></div>
<div class="a" style="left:272.8px;top:980.00px;font-size:13px;line-height:13px;color:#444;font-family:'Liberation Sans',sans-serif;transform:scaleX(0.9300);transform-origin:left;">Лист2</div>
<div class="a" style="left:319px;top:977px;width:1px;height:20px;background:#a8a8a8"></div>
<svg class="a" style="left:352px;top:978px" width="18" height="18"><circle cx="9" cy="9" r="7.6" fill="none" stroke="#6a6a6a" stroke-width="1.3"/><path d="M9 4.5v9M4.5 9h9" stroke="#6a6a6a" stroke-width="1.8"/></svg>
<div class="a" style="left:768px;top:983px;width:2px;height:2px;background:#a8a8a8"></div>
<div class="a" style="left:768px;top:987px;width:2px;height:2px;background:#a8a8a8"></div>
<div class="a" style="left:768px;top:991px;width:2px;height:2px;background:#a8a8a8"></div>
<div class="a" style="left:785px;top:980px;width:15px;height:15px;background:#fff;border:1px solid #a8a8a8"></div>
<svg class="a" style="left:790px;top:983px" width="5" height="9"><polygon points="5,0 5,9 0,4.5" fill="#666"/></svg>
<div class="a" style="left:800px;top:980px;width:403px;height:15px;background:#fff;border:1px solid #a8a8a8"></div>
<div class="a" style="left:1203px;top:981px;width:41px;height:13px;background:#dadada"></div>
<div class="a" style="left:1244px;top:980px;width:15px;height:15px;background:#fff;border:1px solid #a8a8a8"></div>
<svg class="a" style="left:1250px;top:983px" width="5" height="9"><polygon points="0,0 0,9 5,4.5" fill="#666"/></svg>
<div class="a" style="left:0px;top:1002px;width:1280px;height:20px;background:#f1f1f1"></div>
<div class="a" style="left:7.5px;top:1005.84px;font-size:12px;line-height:12px;color:#444;font-family:'Liberation Sans',sans-serif;transform:scaleX(0.9713);transform-origin:left;">Готово</div>
<div class="a" style="left:988px;top:1002px;width:38px;height:20px;background:#c6c6c6"></div>
<svg class="a" style="left:1000px;top:1005px" width="14" height="14"><rect x="0.5" y="0.5" width="12" height="12" fill="none" stroke="#6a6a6a"/><path d="M4.5 0.5v12M8.5 0.5v12M0.5 4.5h12M0.5 8.5h12" stroke="#6a6a6a"/></svg>
<svg class="a" style="left:1038px;top:1004px" width="15" height="15"><rect x="0.6" y="0.6" width="13" height="13" fill="none" stroke="#666" stroke-width="1.2"/><rect x="3.5" y="3.5" width="7" height="7" fill="none" stroke="#666"/><path d="M5 5.5h4M5 7h4M5 8.5h4" stroke="#666" stroke-width=".8"/></svg>
<svg class="a" style="left:1076px;top:1004px" width="15" height="15"><rect x="0.6" y="0.6" width="13" height="13" fill="none" stroke="#666" stroke-width="1.2"/><path d="M4.5 0.6v6h4.5v-6M9 6.6h4.6" fill="none" stroke="#666" stroke-width="1.1"/></svg>
<div class="a" style="left:1107px;top:1011px;width:6px;height:2px;background:#555"></div>
<div class="a" style="left:1117px;top:1011px;width:100px;height:1px;background:#a0a0a0"></div>
<div class="a" style="left:1167px;top:1006px;width:4px;height:11px;background:#555"></div>
<div class="a" style="left:1221px;top:1011px;width:8px;height:2px;background:#555"></div>
<div class="a" style="left:1224px;top:1007.5px;width:2px;height:8.5px;background:#555"></div>
<div class="a" style="left:1245.5px;top:1004.84px;font-size:12px;line-height:12px;color:#555;font-family:'Liberation Sans',sans-serif;transform:scaleX(0.8822);transform-origin:left;">112%</div>
<div class="a" style="left:0px;top:1022px;width:1280px;height:2px;background:#1c1c1c"></div>
<div class="a" style="left:721px;top:315px;width:394px;height:332px;box-shadow:0 4px 18px rgba(0,0,0,.32)"></div>
<div class="a" style="left:721px;top:315px;width:394px;height:332px;background:#f0f0f0;border:1px solid #2a62d0"></div>
<div class="a" style="left:722px;top:316px;width:392px;height:30px;background:#fff"></div>
<div class="a" style="left:730.6px;top:325.84px;font-size:12px;line-height:12px;color:#000;font-family:'Liberation Sans',sans-serif;transform:scaleX(0.9885);transform-origin:left;">Проверка вводимых значений</div>
<div class="a" style="left:1043px;top:325.00px;font-size:13px;line-height:13px;color:#000;font-family:'Liberation Sans',sans-serif;transform:scaleX(0.8294);transform-origin:left;">?</div>
<svg class="a" style="left:1085px;top:324px" width="12" height="12"><path d="M0.5 0.5l11 11M11.5 0.5l-11 11" stroke="#000" stroke-width="1.1"/></svg>
<div class="a" style="left:728px;top:374px;width:378px;height:233px;background:#fff;border:1px solid #d9d9d9"></div>
<div class="a" style="left:808px;top:355px;width:135px;height:20px;background:#f0f0f0;border:1px solid #d9d9d9;border-bottom:none"></div>
<div class="a" style="left:942px;top:355px;width:142px;height:20px;background:#f0f0f0;border:1px solid #d9d9d9;border-bottom:none"></div>
<div class="a" style="left:728px;top:353px;width:81px;height:22px;background:#fff;border:1px solid #d9d9d9;border-bottom:none"></div>
<div class="a" style="left:732px;top:357px;width:72px;height:16px;border:1px dotted #000"></div>
<div class="a" style="left:737.5px;top:359.84px;font-size:12px;line-height:12px;color:#000;font-family:'Liberation Sans',sans-serif;transform:scaleX(0.9348);transform-origin:left;">Параметры</div>
<div class="a" style="left:817px;top:360.84px;font-size:12px;line-height:12px;color:#000;font-family:'Liberation Sans',sans-serif;transform:scaleX(0.9326);transform-origin:left;">Сообщение для ввода</div>
<div class="a" style="left:951.25px;top:360.84px;font-size:12px;line-height:12px;color:#000;font-family:'Liberation Sans',sans-serif;transform:scaleX(0.9749);transform-origin:left;">Сообщение об ошибке</div>
<div class="a" style="left:736.9px;top:385.54px;font-size:12px;line-height:12px;color:#000;font-family:'Liberation Sans',sans-serif;transform:scaleX(0.9762);transform-origin:left;">Условие проверки</div>
<div class="a" style="left:841px;top:390px;width:258px;height:1px;background:#dcdcdc"></div>
<div class="a" style="left:746.25px;top:405.84px;font-size:12px;line-height:12px;color:#000;font-family:'Liberation Sans',sans-serif;transform:scaleX(0.9233);transform-origin:left;">Тип данных:</div>
<div class="a" style="left:746px;top:416px;width:6px;height:1px;background:#000"></div>
<div class="a" style="left:746px;top:420px;width:133px;height:22px;background:#fff;border:1px solid #adadad"></div>
<div class="a" style="left:861px;top:421px;width:17px;height:20px;background:#e1e1e1;border-left:1px solid #adadad"></div>
<svg class="a" style="left:864px;top:428px" width="11" height="7"><path d="M0.5 0.5l5 5 5-5" fill="none" stroke="#444" stroke-width="1"/></svg>
<div class="a" style="left:750.6px;top:425.24px;font-size:12px;line-height:12px;color:#000;font-family:'Liberation Sans',sans-serif;transform:scaleX(0.9515);transform-origin:left;">Список</div>
<div class="a" style="left:746.25px;top:446.24px;font-size:12px;line-height:12px;color:#8d8d8d;font-family:'Liberation Sans',sans-serif;transform:scaleX(0.9547);transform-origin:left;">Значение:</div>
<div class="a" style="left:746px;top:461px;width:133px;height:22px;background:#f0f0f0;border:1px solid #b9b9b9"></div>
<div class="a" style="left:861px;top:462px;width:17px;height:20px;background:#cccccc"></div>
<svg class="a" style="left:864px;top:469px" width="11" height="7"><path d="M0.5 0.5l5 5 5-5" fill="none" stroke="#e0e0e0" stroke-width="1"/></svg>
<div class="a" style="left:750.6px;top:466.44px;font-size:12px;line-height:12px;color:#8d8d8d;font-family:'Liberation Sans',sans-serif;transform:scaleX(0.9211);transform-origin:left;">между</div>
<div class="a" style="left:888px;top:421px;width:13px;height:13px;background:#fff;border:1px solid #333"></div>
<svg class="a" style="left:890px;top:423px" width="10" height="9"><path d="M0.5 4.5l3 3 6-6.5" fill="none" stroke="#222" stroke-width="1.4"/></svg>
<div class="a" style="left:905.8px;top:422.24px;font-size:12px;line-height:12px;color:#000;font-family:'Liberation Sans',sans-serif;transform:scaleX(0.9793);transform-origin:left;">Игнорировать пустые ячейки</div>
<div class="a" style="left:1025px;top:433px;width:6px;height:1px;background:#000"></div>
<div class="a" style="left:888px;top:440px;width:13px;height:13px;background:#fff;border:1px solid #333"></div>
<svg class="a" style="left:890px;top:442px" width="10" height="9"><path d="M0.5 4.5l3 3 6-6.5" fill="none" stroke="#222" stroke-width="1.4"/></svg>
<div class="a" style="left:905.8px;top:441.44px;font-size:12px;line-height:12px;color:#000;font-family:'Liberation Sans',sans-serif;transform:scaleX(0.9624);transform-origin:left;">Список допустимых значений</div>
<div class="a" style="left:905px;top:452px;width:8px;height:1px;background:#000"></div>
<div class="a" style="left:746.25px;top:487.74px;font-size:12px;line-height:12px;color:#000;font-family:'Liberation Sans',sans-serif;transform:scaleX(0.9897);transform-origin:left;">Источник:</div>
<div class="a" style="left:746px;top:498px;width:8px;height:1px;background:#000"></div>
<div class="a" style="left:746px;top:502px;width:322px;height:20px;background:#fff;border:1px solid #adadad"></div>
<div class="a" style="left:1046px;top:502px;width:22px;height:20px;background:#e6e6e6;border:2px solid #a9a9a9"></div>
<svg class="a" style="left:1049px;top:506px" width="16" height="13"><path d="M0.5 1v12M5.5 1v12M10.5 1v12M0.5 0.8h15M0.5 3.8h15M0.5 6.8h15M0.5 9.8h15M0.5 12.5h15" stroke="#5878a8" stroke-width="1"/><rect x="0" y="0" width="6" height="2" fill="#3a6fd0"/><rect x="0" y="2.5" width="4.5" height="1.5" fill="#1f2f4a"/><path d="M5 3.5h5.3l-1.6 1.6 3.8 3.8-2.2 2.2-3.8-3.8L5 8.9z" fill="#d83a22"/></svg>
<div class="a" style="left:750.5px;top:507.44px;font-size:12px;line-height:12px;color:#000;font-family:'Liberation Sans',sans-serif;transform:scaleX(0.9737);transform-origin:left;">=Код</div>
<div class="a" style="left:737px;top:571px;width:13px;height:13px;background:#fff;border:1px solid #333"></div>
<div class="a" style="left:754.1px;top:571.54px;font-size:12px;line-height:12px;color:#000;font-family:'Liberation Sans',sans-serif;transform:scaleX(0.9644);transform-origin:left;">Распространить изменения на другие ячейки с тем же</div>
<div class="a" style="left:754px;top:582px;width:8px;height:1px;background:#000"></div>
<div class="a" style="left:754.1px;top:584.14px;font-size:12px;line-height:12px;color:#000;font-family:'Liberation Sans',sans-serif;transform:scaleX(0.9127);transform-origin:left;">условием</div>
<div class="a" style="left:728px;top:616px;width:88px;height:22px;background:#e1e1e1;border:1px solid #adadad"></div>
<div class="a" style="left:736.25px;top:621.59px;font-size:12px;line-height:12px;color:#000;font-family:'Liberation Sans',sans-serif;transform:scaleX(0.9398);transform-origin:left;">Очистить все</div>
<div class="a" style="left:747px;top:632px;width:7px;height:1px;background:#000"></div>
<div class="a" style="left:949px;top:616px;width:74px;height:22px;background:#e1e1e1;border:2px solid #0078d7"></div>
<div class="a" style="left:978.25px;top:621.59px;font-size:12px;line-height:12px;color:#000;font-family:'Liberation Sans',sans-serif;transform:scaleX(0.8649);transform-origin:left;">OK</div>
<div class="a" style="left:1033px;top:616px;width:74px;height:22px;background:#e1e1e1;border:1px solid #adadad"></div>
<div class="a" style="left:1049.5px;top:621.59px;font-size:12px;line-height:12px;color:#000;font-family:'Liberation Sans',sans-serif;transform:scaleX(0.9289);transform-origin:left;">Отмена</div>
</body></html>
